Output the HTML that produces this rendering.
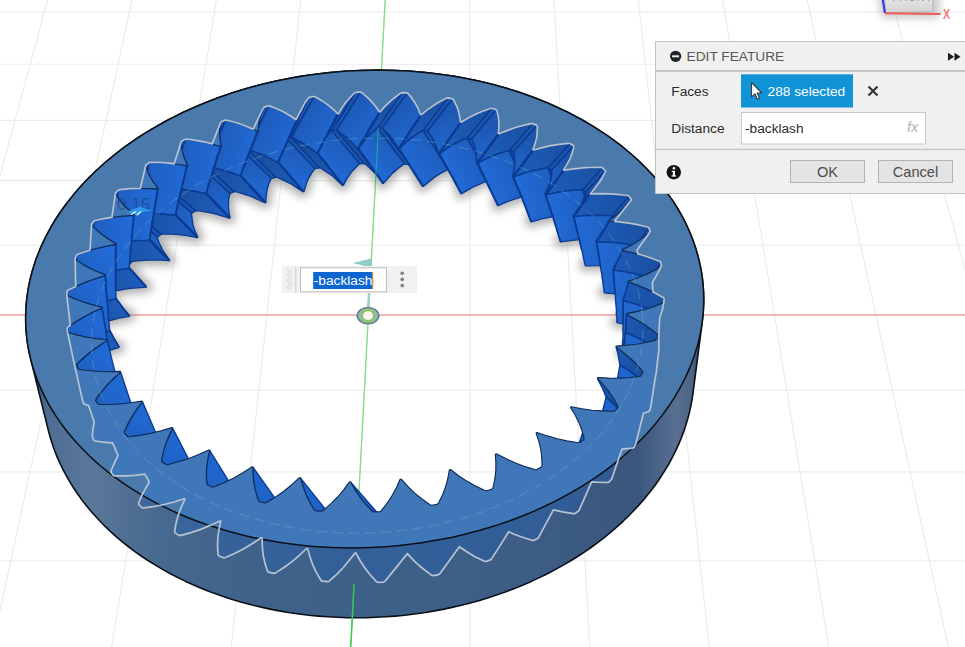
<!DOCTYPE html>
<html><head><meta charset="utf-8"><title>Fusion</title>
<style>
html,body{margin:0;padding:0;background:#fff;}
body{width:965px;height:647px;overflow:hidden;font-family:"Liberation Sans",sans-serif;}
svg{display:block;position:absolute;left:0;top:0;}
text{font-family:"Liberation Sans",sans-serif;}
</style></head><body>
<svg width="965" height="647" viewBox="0 0 965 647">
<rect width="965" height="647" fill="#ffffff"/>
<defs>
<linearGradient id="wallg" x1="0" y1="0" x2="965" y2="0" gradientUnits="userSpaceOnUse">
<stop offset="0.027" stop-color="#2c476c"/><stop offset="0.05" stop-color="#4d6d95"/><stop offset="0.095" stop-color="#5a7899"/><stop offset="0.16" stop-color="#48698f"/><stop offset="0.26" stop-color="#3f628a"/><stop offset="0.42" stop-color="#3d6089"/><stop offset="0.57" stop-color="#3c5c85"/><stop offset="0.66" stop-color="#3a567c"/><stop offset="0.70" stop-color="#586f91"/><stop offset="0.716" stop-color="#4d6587"/><stop offset="0.73" stop-color="#2c4263"/></linearGradient>
<filter id="blur6" x="-20%" y="-20%" width="140%" height="140%"><feGaussianBlur stdDeviation="4"/></filter>
<clipPath id="bodyclip"><path d="M377.9,70.1 370.1,70.2 362.3,70.4 354.5,70.7 346.7,71.1 338.9,71.7 331.1,72.4 323.4,73.2 315.6,74.2 307.9,75.2 300.2,76.4 292.5,77.8 284.9,79.2 277.3,80.8 269.7,82.5 262.2,84.3 254.7,86.2 247.3,88.3 239.9,90.5 232.6,92.8 225.3,95.2 218.1,97.8 211.0,100.5 204.0,103.3 197.0,106.2 190.1,109.2 183.3,112.3 176.6,115.6 169.9,119.0 163.4,122.5 157.0,126.1 150.7,129.8 144.4,133.6 138.3,137.5 132.3,141.6 126.5,145.7 120.7,150.0 115.1,154.3 109.6,158.8 104.3,163.3 99.1,168.0 94.0,172.7 89.1,177.6 84.3,182.5 79.7,187.6 75.2,192.7 71.0,197.9 66.8,203.2 62.9,208.5 59.1,214.0 55.5,219.5 52.1,225.1 48.9,230.8 45.9,236.5 43.1,242.4 40.4,248.2 38.0,254.2 35.8,260.1 33.8,266.2 32.0,272.3 30.4,278.4 29.0,284.6 27.9,290.8 27.0,297.0 26.3,303.3 25.9,309.6 25.7,315.9 25.7,322.2 26.0,328.6 26.5,334.9 27.2,341.3 28.2,347.6 29.5,354.0 31.0,360.3 48.7,431.9 50.5,438.2 52.5,444.4 54.7,450.7 57.1,456.9 59.8,463.0 62.8,469.1 66.0,475.2 69.4,481.2 73.1,487.2 77.0,493.0 81.1,498.9 85.5,504.6 90.1,510.2 95.0,515.8 100.1,521.3 105.4,526.7 110.9,531.9 116.7,537.1 122.7,542.1 128.9,547.0 135.3,551.8 141.9,556.5 148.8,561.0 155.8,565.4 163.0,569.6 170.4,573.7 178.0,577.6 185.7,581.4 193.7,585.0 201.7,588.4 210.0,591.7 218.4,594.8 226.9,597.7 235.6,600.4 244.4,602.9 253.3,605.3 262.3,607.4 271.4,609.4 280.6,611.1 289.9,612.7 299.3,614.0 308.8,615.2 318.3,616.1 327.8,616.8 337.4,617.3 347.0,617.7 356.6,617.8 366.3,617.7 375.9,617.3 385.6,616.8 395.2,616.1 404.8,615.2 414.3,614.0 423.8,612.7 433.3,611.1 442.7,609.4 452.0,607.4 461.2,605.3 470.4,602.9 479.5,600.4 488.4,597.7 497.2,594.8 505.9,591.7 514.5,588.4 523.0,585.0 531.3,581.4 539.4,577.6 547.4,573.7 555.2,569.6 562.8,565.4 570.3,561.0 577.6,556.5 584.7,551.8 591.6,547.0 598.3,542.1 604.8,537.1 611.1,531.9 617.2,526.7 623.1,521.3 628.7,515.8 634.1,510.2 639.3,504.6 644.3,498.9 649.1,493.0 653.6,487.2 657.9,481.2 661.9,475.2 665.7,469.1 669.3,463.0 672.6,456.9 675.7,450.7 678.6,444.4 681.2,438.2 683.6,431.9 685.7,425.6 687.6,419.2 689.3,412.9 690.7,406.6 691.9,400.3 692.9,393.9 702.2,322.2 702.9,315.9 703.4,309.6 703.7,303.3 703.7,297.0 703.5,290.8 703.0,284.6 702.4,278.4 701.5,272.3 700.3,266.2 699.0,260.1 697.4,254.2 695.7,248.2 693.7,242.4 691.5,236.5 689.1,230.8 686.5,225.1 683.8,219.5 680.8,214.0 677.6,208.5 674.3,203.2 670.7,197.9 667.0,192.7 663.1,187.6 659.1,182.5 654.9,177.6 650.5,172.7 645.9,168.0 641.2,163.3 636.4,158.8 631.4,154.3 626.3,150.0 621.0,145.7 615.6,141.6 610.0,137.5 604.4,133.6 598.6,129.8 592.7,126.1 586.6,122.5 580.5,119.0 574.2,115.6 567.9,112.3 561.4,109.2 554.9,106.2 548.2,103.3 541.5,100.5 534.6,97.8 527.7,95.2 520.8,92.8 513.7,90.5 506.6,88.3 499.4,86.2 492.1,84.3 484.8,82.5 477.4,80.8 470.0,79.2 462.5,77.8 455.0,76.4 447.4,75.2 439.8,74.2 432.1,73.2 424.5,72.4 416.7,71.7 409.0,71.1 401.3,70.7 393.5,70.4 385.7,70.2Z"/></clipPath>
<clipPath id="holeclip"><path d="M664.0,300.3 664.0,298.5 663.0,297.4 661.4,296.5 654.4,292.6 646.7,288.9 638.0,285.3 628.7,282.0 628.6,281.2 637.6,278.1 645.7,274.8 652.8,271.3 659.1,267.7 660.6,266.8 661.4,265.8 661.0,264.0 660.7,262.2 659.4,261.3 657.7,260.6 650.1,257.7 641.8,255.1 632.7,252.7 622.9,250.5 622.6,249.8 630.4,245.8 637.5,241.6 643.4,237.4 648.5,233.2 649.7,232.3 650.3,231.2 649.5,229.5 648.7,227.8 647.3,227.1 645.4,226.6 637.5,224.7 629.0,223.1 619.6,221.9 609.7,221.0 609.3,220.3 615.8,215.5 621.5,210.7 626.2,206.0 630.1,201.4 631.0,200.3 631.3,199.2 630.1,197.7 629.0,196.1 627.5,195.6 625.6,195.4 617.5,194.4 609.0,193.8 599.7,193.7 589.9,194.0 589.4,193.4 594.5,188.0 598.8,182.7 602.2,177.7 604.8,172.8 605.4,171.6 605.4,170.5 603.9,169.2 602.4,167.9 600.8,167.5 599.0,167.5 591.0,167.5 582.6,167.9 573.6,168.8 564.3,170.2 563.6,169.6 567.3,163.9 570.2,158.3 572.2,153.1 573.5,148.0 573.8,146.9 573.5,145.8 571.8,144.7 570.0,143.6 568.4,143.4 566.6,143.6 558.9,144.5 550.9,145.8 542.5,147.7 533.7,150.0 533.0,149.6 535.1,143.6 536.5,137.9 537.2,132.6 537.3,127.6 537.3,126.4 536.7,125.4 534.8,124.5 532.8,123.6 531.2,123.6 529.5,124.0 522.3,125.7 514.8,127.9 507.0,130.7 499.1,133.9 498.3,133.6 498.8,127.5 498.9,121.8 498.2,116.6 497.1,111.7 496.8,110.6 496.0,109.7 493.9,109.0 491.8,108.4 490.2,108.5 488.6,109.1 482.0,111.6 475.2,114.5 468.3,118.0 461.4,122.0 460.5,121.8 459.6,115.9 458.2,110.3 456.3,105.3 453.9,100.7 453.4,99.6 452.4,98.8 450.2,98.4 447.9,98.0 446.4,98.3 445.0,99.1 439.1,102.2 433.2,105.8 427.3,110.0 421.5,114.7 420.5,114.5 418.1,108.8 415.4,103.6 412.3,98.9 408.8,94.6 408.0,93.6 406.9,93.0 404.6,92.8 402.2,92.7 400.8,93.2 399.7,94.0 394.6,97.7 389.7,101.9 384.9,106.6 380.3,111.8 379.3,111.8 375.5,106.5 371.5,101.7 367.2,97.4 362.8,93.6 361.7,92.7 360.4,92.2 358.1,92.3 355.8,92.4 354.5,93.0 353.5,94.0 349.4,98.2 345.5,102.8 342.0,108.0 338.7,113.6 337.7,113.7 332.6,108.9 327.4,104.6 322.1,100.9 316.7,97.7 315.5,96.9 314.0,96.5 311.7,96.9 309.4,97.2 308.3,98.0 307.6,99.1 304.5,103.6 301.8,108.6 299.6,114.1 297.7,120.0 296.7,120.2 290.5,116.0 284.2,112.4 277.9,109.3 271.7,106.7 270.2,106.1 268.7,105.9 266.5,106.5 264.3,107.1 263.3,108.0 262.9,109.1 261.0,113.9 259.5,119.1 258.6,124.8 258.2,130.9 257.3,131.2 249.9,127.8 242.6,124.8 235.6,122.5 228.6,120.7 227.0,120.2 225.4,120.2 223.3,121.0 221.2,121.9 220.5,122.9 220.4,124.0 219.6,129.0 219.5,134.3 220.0,140.0 221.1,146.1 220.3,146.5 212.0,143.9 203.9,141.9 196.1,140.4 188.6,139.3 186.9,139.1 185.2,139.2 183.3,140.3 181.4,141.4 181.0,142.4 181.1,143.6 181.6,148.6 182.8,153.9 184.8,159.5 187.4,165.3 186.7,165.8 177.6,164.3 168.9,163.2 160.6,162.6 152.7,162.4 150.8,162.3 149.2,162.7 147.5,164.0 145.9,165.3 145.6,166.4 146.1,167.5 147.9,172.4 150.4,177.5 153.9,182.9 158.1,188.3 157.4,188.9 147.8,188.5 138.6,188.4 130.0,188.8 121.8,189.5 119.9,189.7 118.3,190.2 117.0,191.7 115.6,193.2 115.6,194.3 116.4,195.4 119.5,200.1 123.4,204.8 128.3,209.7 134.0,214.7 133.5,215.3 123.5,216.0 114.0,217.0 105.3,218.4 97.2,220.1 95.2,220.5 93.7,221.3 92.7,222.9 91.7,224.5 92.0,225.6 93.1,226.6 97.5,230.9 102.7,235.2 109.0,239.5 116.1,243.7 115.7,244.4 105.7,246.3 96.2,248.5 87.6,250.9 79.6,253.6 77.8,254.3 76.4,255.2 75.8,256.9 75.1,258.7 75.8,259.8 77.1,260.6 82.7,264.4 89.2,268.0 96.8,271.5 105.1,274.8 105.0,275.6 95.1,278.7 85.9,282.0 77.7,285.5 70.2,289.2 68.4,290.1 67.3,291.1 67.0,293.0 66.8,294.8 67.8,295.8 69.4,296.5 76.1,299.5 83.7,302.3 92.4,304.9 101.9,307.1 101.9,307.9 92.6,312.2 84.0,316.7 76.4,321.2 69.6,325.9 68.0,327.0 67.1,328.2 67.3,330.0 67.6,331.9 68.8,332.7 70.6,333.2 78.4,335.4 86.9,337.2 96.5,338.6 106.8,339.7 107.0,340.4 98.6,345.9 90.9,351.5 84.3,357.0 78.4,362.5 77.1,363.8 76.4,365.1 77.2,366.9 77.9,368.7 79.4,369.4 81.4,369.7 89.9,370.8 99.2,371.5 109.4,371.7 120.2,371.4 120.6,372.1 113.3,378.7 106.9,385.2 101.5,391.5 96.9,397.7 95.9,399.2 95.5,400.6 96.7,402.3 98.0,404.0 99.7,404.5 101.8,404.5 110.9,404.5 120.5,404.0 131.0,402.8 142.0,401.1 142.6,401.8 136.8,409.2 131.9,416.6 128.0,423.6 124.9,430.3 124.2,431.9 124.2,433.4 125.9,434.9 127.6,436.5 129.5,436.7 131.6,436.4 140.9,435.2 150.7,433.4 161.0,430.8 171.8,427.6 172.6,428.2 168.6,436.4 165.5,444.3 163.3,451.8 161.9,458.9 161.5,460.6 161.9,462.0 164.0,463.3 166.1,464.6 168.1,464.6 170.2,464.0 179.4,461.5 188.8,458.4 198.7,454.5 208.8,449.9 209.8,450.4 207.8,459.0 206.6,467.2 206.3,474.9 206.7,482.1 206.8,483.8 207.5,485.1 210.0,486.1 212.4,487.1 214.4,486.8 216.4,486.0 225.1,482.3 233.8,478.0 242.8,472.7 251.8,466.9 252.9,467.2 253.1,475.9 254.0,484.2 255.6,491.7 257.8,498.8 258.3,500.5 259.4,501.7 262.1,502.3 264.9,503.0 266.8,502.4 268.6,501.3 276.4,496.5 284.1,491.0 291.8,484.7 299.3,477.7 300.5,477.9 302.9,486.4 305.8,494.4 309.3,501.6 313.3,508.2 314.2,509.8 315.6,510.8 318.5,511.1 321.4,511.3 323.2,510.5 324.7,509.2 331.2,503.4 337.6,497.0 343.6,489.8 349.4,481.9 350.6,481.9 355.1,489.9 360.0,497.3 365.3,503.9 370.9,509.8 372.2,511.2 373.9,512.0 376.8,511.9 379.7,511.7 381.3,510.7 382.5,509.2 387.5,502.7 392.1,495.6 396.4,487.7 400.1,479.2 401.3,479.1 407.8,486.3 414.4,492.8 421.3,498.5 428.2,503.5 429.9,504.7 431.7,505.2 434.5,504.7 437.4,504.1 438.7,502.9 439.4,501.3 442.8,494.3 445.6,486.8 447.8,478.5 449.4,469.8 450.6,469.5 458.6,475.7 466.8,481.1 474.9,485.7 482.9,489.6 484.8,490.5 486.7,490.8 489.3,489.9 492.0,489.0 493.0,487.7 493.3,486.0 494.8,478.8 495.8,471.1 495.9,462.8 495.3,454.2 496.4,453.8 505.7,458.6 515.0,462.8 524.0,466.2 532.7,468.9 534.8,469.5 536.7,469.6 539.1,468.3 541.4,467.1 542.0,465.7 542.0,464.0 541.7,456.8 540.7,449.3 538.8,441.3 536.1,433.0 537.0,432.5 547.3,435.9 557.3,438.8 566.8,440.9 575.9,442.3 578.0,442.7 579.9,442.5 581.9,441.0 583.8,439.5 584.1,438.0 583.6,436.4 581.6,429.5 578.8,422.4 575.1,415.0 570.5,407.4 571.2,406.7 582.0,408.7 592.3,410.2 601.9,410.9 611.0,411.2 613.2,411.2 614.9,410.8 616.5,409.1 617.9,407.4 617.8,406.0 617.0,404.5 613.4,398.2 609.0,391.7 603.6,385.0 597.4,378.2 597.9,377.5 608.7,378.1 619.0,378.2 628.4,377.7 637.2,376.8 639.2,376.6 640.8,376.0 641.9,374.2 642.9,372.3 642.4,371.0 641.3,369.7 636.3,364.0 630.6,358.3 623.7,352.6 616.1,346.9 616.5,346.1 627.0,345.3 636.8,344.2 645.7,342.5 653.9,340.6 655.8,340.1 657.1,339.3 657.7,337.5 658.2,335.6 657.5,334.4 656.1,333.2 650.0,328.4 643.1,323.7 635.2,319.0 626.5,314.4 626.7,313.6 636.5,311.6 645.7,309.3 653.8,306.7 661.1,303.8 662.8,303.1 663.9,302.2Z"/></clipPath>
</defs>
<defs><linearGradient id="g0" gradientUnits="userSpaceOnUse" x1="626.2" y1="291.4" x2="662.0" y2="306.5"><stop offset="0" stop-color="#1c59b3"/><stop offset="1" stop-color="#194fa0"/></linearGradient><linearGradient id="g1" gradientUnits="userSpaceOnUse" x1="623.1" y1="327.3" x2="658.2" y2="342.4"><stop offset="0" stop-color="#2167cf"/><stop offset="1" stop-color="#1d5cb9"/></linearGradient><linearGradient id="g2" gradientUnits="userSpaceOnUse" x1="618.3" y1="260.4" x2="656.2" y2="270.7"><stop offset="0" stop-color="#1d59b4"/><stop offset="1" stop-color="#1a50a1"/></linearGradient><linearGradient id="g3" gradientUnits="userSpaceOnUse" x1="615.4" y1="296.3" x2="652.6" y2="306.6"><stop offset="0" stop-color="#2168d1"/><stop offset="1" stop-color="#1e5dbb"/></linearGradient><linearGradient id="g4" gradientUnits="userSpaceOnUse" x1="603.4" y1="231.4" x2="642.1" y2="237.0"><stop offset="0" stop-color="#1d5ab6"/><stop offset="1" stop-color="#1a51a3"/></linearGradient><linearGradient id="g5" gradientUnits="userSpaceOnUse" x1="602.9" y1="230.8" x2="623.1" y2="209.1"><stop offset="0" stop-color="#1e5ebe"/><stop offset="1" stop-color="#1b54aa"/></linearGradient><linearGradient id="g6" gradientUnits="userSpaceOnUse" x1="600.8" y1="267.3" x2="638.8" y2="272.9"><stop offset="0" stop-color="#2168d2"/><stop offset="1" stop-color="#1e5dbc"/></linearGradient><linearGradient id="g7" gradientUnits="userSpaceOnUse" x1="582.1" y1="205.3" x2="620.6" y2="206.2"><stop offset="0" stop-color="#1d5bb7"/><stop offset="1" stop-color="#1a51a4"/></linearGradient><linearGradient id="g8" gradientUnits="userSpaceOnUse" x1="581.5" y1="204.7" x2="595.6" y2="181.5"><stop offset="0" stop-color="#1e5fbf"/><stop offset="1" stop-color="#1b55ab"/></linearGradient><linearGradient id="g9" gradientUnits="userSpaceOnUse" x1="579.9" y1="241.2" x2="617.7" y2="242.0"><stop offset="0" stop-color="#2269d4"/><stop offset="1" stop-color="#1e5ebd"/></linearGradient><linearGradient id="g10" gradientUnits="userSpaceOnUse" x1="555.2" y1="182.5" x2="592.6" y2="178.9"><stop offset="0" stop-color="#1d5bb8"/><stop offset="1" stop-color="#1a52a5"/></linearGradient><linearGradient id="g11" gradientUnits="userSpaceOnUse" x1="554.5" y1="182.0" x2="562.6" y2="157.9"><stop offset="0" stop-color="#1f60c1"/><stop offset="1" stop-color="#1b55ac"/></linearGradient><linearGradient id="g12" gradientUnits="userSpaceOnUse" x1="553.6" y1="218.3" x2="590.3" y2="214.8"><stop offset="0" stop-color="#226ad5"/><stop offset="1" stop-color="#1e5ebe"/></linearGradient><linearGradient id="g13" gradientUnits="userSpaceOnUse" x1="523.7" y1="163.4" x2="559.0" y2="155.8"><stop offset="0" stop-color="#1d5cb9"/><stop offset="1" stop-color="#1a52a5"/></linearGradient><linearGradient id="g14" gradientUnits="userSpaceOnUse" x1="522.9" y1="163.0" x2="525.0" y2="138.8"><stop offset="0" stop-color="#1f61c3"/><stop offset="1" stop-color="#1c56ae"/></linearGradient><linearGradient id="g15" gradientUnits="userSpaceOnUse" x1="522.7" y1="199.2" x2="557.4" y2="191.6"><stop offset="0" stop-color="#226ad5"/><stop offset="1" stop-color="#1e5fbf"/></linearGradient><linearGradient id="g16" gradientUnits="userSpaceOnUse" x1="488.5" y1="148.5" x2="521.0" y2="137.1"><stop offset="0" stop-color="#1d5cb9"/><stop offset="1" stop-color="#1a52a5"/></linearGradient><linearGradient id="g17" gradientUnits="userSpaceOnUse" x1="487.6" y1="148.1" x2="483.7" y2="124.4"><stop offset="0" stop-color="#1f62c5"/><stop offset="1" stop-color="#1c57b0"/></linearGradient><linearGradient id="g18" gradientUnits="userSpaceOnUse" x1="488.1" y1="184.2" x2="520.0" y2="172.9"><stop offset="0" stop-color="#226ad5"/><stop offset="1" stop-color="#1e5fbf"/></linearGradient><linearGradient id="g19" gradientUnits="userSpaceOnUse" x1="450.4" y1="137.8" x2="479.4" y2="123.2"><stop offset="0" stop-color="#1d5cb9"/><stop offset="1" stop-color="#1a52a5"/></linearGradient><linearGradient id="g20" gradientUnits="userSpaceOnUse" x1="449.4" y1="137.6" x2="439.8" y2="114.9"><stop offset="0" stop-color="#2063c7"/><stop offset="1" stop-color="#1c58b2"/></linearGradient><linearGradient id="g21" gradientUnits="userSpaceOnUse" x1="450.7" y1="173.6" x2="479.2" y2="158.9"><stop offset="0" stop-color="#226ad5"/><stop offset="1" stop-color="#1e5ebe"/></linearGradient><linearGradient id="g22" gradientUnits="userSpaceOnUse" x1="449.8" y1="173.4" x2="440.3" y2="150.6"><stop offset="0" stop-color="#1c58b2"/><stop offset="1" stop-color="#194f9f"/></linearGradient><linearGradient id="g23" gradientUnits="userSpaceOnUse" x1="410.4" y1="131.7" x2="435.3" y2="114.3"><stop offset="0" stop-color="#1d5bb8"/><stop offset="1" stop-color="#1a52a5"/></linearGradient><linearGradient id="g24" gradientUnits="userSpaceOnUse" x1="409.4" y1="131.6" x2="394.4" y2="110.5"><stop offset="0" stop-color="#2064c9"/><stop offset="1" stop-color="#1d59b4"/></linearGradient><linearGradient id="g25" gradientUnits="userSpaceOnUse" x1="411.4" y1="167.5" x2="435.9" y2="149.9"><stop offset="0" stop-color="#2269d4"/><stop offset="1" stop-color="#1e5ebe"/></linearGradient><linearGradient id="g26" gradientUnits="userSpaceOnUse" x1="410.4" y1="167.4" x2="395.7" y2="146.2"><stop offset="0" stop-color="#1c57b0"/><stop offset="1" stop-color="#194e9d"/></linearGradient><linearGradient id="g27" gradientUnits="userSpaceOnUse" x1="369.3" y1="130.2" x2="389.8" y2="110.4"><stop offset="0" stop-color="#1d5bb7"/><stop offset="1" stop-color="#1a51a4"/></linearGradient><linearGradient id="g28" gradientUnits="userSpaceOnUse" x1="368.3" y1="130.2" x2="348.2" y2="111.2"><stop offset="0" stop-color="#2065cc"/><stop offset="1" stop-color="#1d5ab6"/></linearGradient><linearGradient id="g29" gradientUnits="userSpaceOnUse" x1="371.1" y1="165.9" x2="391.1" y2="146.0"><stop offset="0" stop-color="#2269d3"/><stop offset="1" stop-color="#1e5ebd"/></linearGradient><linearGradient id="g30" gradientUnits="userSpaceOnUse" x1="370.1" y1="166.0" x2="350.4" y2="146.9"><stop offset="0" stop-color="#1c57b0"/><stop offset="1" stop-color="#194e9e"/></linearGradient><linearGradient id="g31" gradientUnits="userSpaceOnUse" x1="328.2" y1="133.3" x2="343.6" y2="111.6"><stop offset="0" stop-color="#1d5bb7"/><stop offset="1" stop-color="#1a51a3"/></linearGradient><linearGradient id="g32" gradientUnits="userSpaceOnUse" x1="327.2" y1="133.5" x2="302.5" y2="117.0"><stop offset="0" stop-color="#2166ce"/><stop offset="1" stop-color="#1d5bb8"/></linearGradient><linearGradient id="g33" gradientUnits="userSpaceOnUse" x1="330.7" y1="169.0" x2="345.8" y2="147.2"><stop offset="0" stop-color="#2168d2"/><stop offset="1" stop-color="#1e5dbc"/></linearGradient><linearGradient id="g34" gradientUnits="userSpaceOnUse" x1="329.8" y1="169.2" x2="305.4" y2="152.7"><stop offset="0" stop-color="#1c59b2"/><stop offset="1" stop-color="#194fa0"/></linearGradient><linearGradient id="g35" gradientUnits="userSpaceOnUse" x1="287.9" y1="141.0" x2="297.9" y2="117.9"><stop offset="0" stop-color="#1d5ab6"/><stop offset="1" stop-color="#1a51a3"/></linearGradient><linearGradient id="g36" gradientUnits="userSpaceOnUse" x1="287.0" y1="141.2" x2="258.0" y2="127.8"><stop offset="0" stop-color="#2167d0"/><stop offset="1" stop-color="#1d5cba"/></linearGradient><linearGradient id="g37" gradientUnits="userSpaceOnUse" x1="291.2" y1="176.7" x2="301.0" y2="153.5"><stop offset="0" stop-color="#2167d0"/><stop offset="1" stop-color="#1e5cba"/></linearGradient><linearGradient id="g38" gradientUnits="userSpaceOnUse" x1="290.2" y1="177.0" x2="261.8" y2="163.5"><stop offset="0" stop-color="#1d5ab4"/><stop offset="1" stop-color="#1a50a1"/></linearGradient><linearGradient id="g39" gradientUnits="userSpaceOnUse" x1="248.5" y1="153.5" x2="215.9" y2="143.5"><stop offset="0" stop-color="#2168d1"/><stop offset="1" stop-color="#1e5dbb"/></linearGradient><linearGradient id="g40" gradientUnits="userSpaceOnUse" x1="253.4" y1="188.9" x2="257.5" y2="164.9"><stop offset="0" stop-color="#2167cf"/><stop offset="1" stop-color="#1d5cb9"/></linearGradient><linearGradient id="g41" gradientUnits="userSpaceOnUse" x1="252.5" y1="189.3" x2="220.5" y2="179.3"><stop offset="0" stop-color="#1d5ab6"/><stop offset="1" stop-color="#1a51a3"/></linearGradient><linearGradient id="g42" gradientUnits="userSpaceOnUse" x1="212.7" y1="170.0" x2="177.2" y2="163.9"><stop offset="0" stop-color="#2269d3"/><stop offset="1" stop-color="#1e5dbc"/></linearGradient><linearGradient id="g43" gradientUnits="userSpaceOnUse" x1="218.2" y1="205.4" x2="216.5" y2="181.1"><stop offset="0" stop-color="#2065cc"/><stop offset="1" stop-color="#1d5bb7"/></linearGradient><linearGradient id="g44" gradientUnits="userSpaceOnUse" x1="217.4" y1="205.8" x2="182.5" y2="199.7"><stop offset="0" stop-color="#1d5bb7"/><stop offset="1" stop-color="#1a51a4"/></linearGradient><linearGradient id="g45" gradientUnits="userSpaceOnUse" x1="180.6" y1="190.5" x2="142.9" y2="188.6"><stop offset="0" stop-color="#2269d4"/><stop offset="1" stop-color="#1e5ebd"/></linearGradient><linearGradient id="g46" gradientUnits="userSpaceOnUse" x1="186.6" y1="225.8" x2="179.0" y2="201.9"><stop offset="0" stop-color="#2064ca"/><stop offset="1" stop-color="#1d5ab5"/></linearGradient><linearGradient id="g47" gradientUnits="userSpaceOnUse" x1="185.9" y1="226.3" x2="148.9" y2="224.4"><stop offset="0" stop-color="#1d5cb9"/><stop offset="1" stop-color="#1a52a5"/></linearGradient><linearGradient id="g48" gradientUnits="userSpaceOnUse" x1="153.1" y1="214.6" x2="114.1" y2="217.2"><stop offset="0" stop-color="#226ad5"/><stop offset="1" stop-color="#1e5ebe"/></linearGradient><linearGradient id="g49" gradientUnits="userSpaceOnUse" x1="159.6" y1="249.9" x2="145.9" y2="227.1"><stop offset="0" stop-color="#2063c8"/><stop offset="1" stop-color="#1c59b3"/></linearGradient><linearGradient id="g50" gradientUnits="userSpaceOnUse" x1="159.0" y1="250.5" x2="120.7" y2="253.1"><stop offset="0" stop-color="#1d5cb9"/><stop offset="1" stop-color="#1a52a6"/></linearGradient><linearGradient id="g51" gradientUnits="userSpaceOnUse" x1="131.1" y1="241.9" x2="91.7" y2="249.1"><stop offset="0" stop-color="#226ad5"/><stop offset="1" stop-color="#1e5ebe"/></linearGradient><linearGradient id="g52" gradientUnits="userSpaceOnUse" x1="137.5" y1="277.8" x2="99.0" y2="285.0"><stop offset="0" stop-color="#1d5cb9"/><stop offset="1" stop-color="#1a52a6"/></linearGradient><linearGradient id="g53" gradientUnits="userSpaceOnUse" x1="115.4" y1="271.6" x2="76.9" y2="283.8"><stop offset="0" stop-color="#226ad5"/><stop offset="1" stop-color="#1e5ebe"/></linearGradient><linearGradient id="g54" gradientUnits="userSpaceOnUse" x1="122.3" y1="307.5" x2="84.5" y2="319.7"><stop offset="0" stop-color="#1d5cb9"/><stop offset="1" stop-color="#1a52a6"/></linearGradient><linearGradient id="g55" gradientUnits="userSpaceOnUse" x1="106.9" y1="303.2" x2="70.4" y2="320.1"><stop offset="0" stop-color="#2269d4"/><stop offset="1" stop-color="#1e5ebe"/></linearGradient><linearGradient id="g56" gradientUnits="userSpaceOnUse" x1="114.1" y1="339.1" x2="78.3" y2="356.0"><stop offset="0" stop-color="#1d5cb9"/><stop offset="1" stop-color="#1a52a5"/></linearGradient><linearGradient id="g57" gradientUnits="userSpaceOnUse" x1="106.2" y1="335.7" x2="72.9" y2="357.2"><stop offset="0" stop-color="#2269d4"/><stop offset="1" stop-color="#1e5ebd"/></linearGradient><linearGradient id="g58" gradientUnits="userSpaceOnUse" x1="113.8" y1="368.1" x2="85.0" y2="393.8"><stop offset="0" stop-color="#2168d2"/><stop offset="1" stop-color="#1e5dbc"/></linearGradient><linearGradient id="g59" gradientUnits="userSpaceOnUse" x1="129.6" y1="399.2" x2="106.7" y2="428.7"><stop offset="0" stop-color="#2168d1"/><stop offset="1" stop-color="#1e5dbb"/></linearGradient><linearGradient id="g60" gradientUnits="userSpaceOnUse" x1="153.8" y1="428.1" x2="137.7" y2="460.4"><stop offset="0" stop-color="#2167cf"/><stop offset="1" stop-color="#1d5cb9"/></linearGradient><linearGradient id="g61" gradientUnits="userSpaceOnUse" x1="185.6" y1="453.4" x2="177.4" y2="487.5"><stop offset="0" stop-color="#2166cd"/><stop offset="1" stop-color="#1d5bb7"/></linearGradient><linearGradient id="g62" gradientUnits="userSpaceOnUse" x1="224.2" y1="474.1" x2="224.5" y2="508.8"><stop offset="0" stop-color="#2065cb"/><stop offset="1" stop-color="#1d5ab6"/></linearGradient><linearGradient id="g63" gradientUnits="userSpaceOnUse" x1="268.3" y1="489.2" x2="277.3" y2="523.3"><stop offset="0" stop-color="#2064ca"/><stop offset="1" stop-color="#1d5ab5"/></linearGradient><linearGradient id="g64" gradientUnits="userSpaceOnUse" x1="316.3" y1="498.0" x2="333.7" y2="530.2"><stop offset="0" stop-color="#2063c8"/><stop offset="1" stop-color="#1c59b3"/></linearGradient><linearGradient id="g65" gradientUnits="userSpaceOnUse" x1="366.3" y1="500.1" x2="391.4" y2="529.1"><stop offset="0" stop-color="#1f62c6"/><stop offset="1" stop-color="#1c58b1"/></linearGradient><linearGradient id="g66" gradientUnits="userSpaceOnUse" x1="575.5" y1="453.4" x2="590.4" y2="484.6"><stop offset="0" stop-color="#1f62c6"/><stop offset="1" stop-color="#1c58b1"/></linearGradient><linearGradient id="g67" gradientUnits="userSpaceOnUse" x1="602.1" y1="387.9" x2="624.3" y2="416.1"><stop offset="0" stop-color="#1b56ad"/><stop offset="1" stop-color="#184d9b"/></linearGradient><linearGradient id="g68" gradientUnits="userSpaceOnUse" x1="599.4" y1="423.7" x2="621.1" y2="451.7"><stop offset="0" stop-color="#2064c9"/><stop offset="1" stop-color="#1c59b3"/></linearGradient><linearGradient id="g69" gradientUnits="userSpaceOnUse" x1="618.4" y1="356.1" x2="646.4" y2="380.4"><stop offset="0" stop-color="#1c57ae"/><stop offset="1" stop-color="#194d9c"/></linearGradient><linearGradient id="g70" gradientUnits="userSpaceOnUse" x1="615.3" y1="392.0" x2="642.7" y2="416.2"><stop offset="0" stop-color="#2065cb"/><stop offset="1" stop-color="#1d5ab5"/></linearGradient><linearGradient id="g71" gradientUnits="userSpaceOnUse" x1="626.3" y1="323.6" x2="658.9" y2="343.5"><stop offset="0" stop-color="#1c58b0"/><stop offset="1" stop-color="#194e9e"/></linearGradient><linearGradient id="g72" gradientUnits="userSpaceOnUse" x1="623.2" y1="359.5" x2="655.0" y2="379.3"><stop offset="0" stop-color="#2166cd"/><stop offset="1" stop-color="#1d5bb7"/></linearGradient></defs>
<path d="M-8.0,205.4 49.7,-7.9M-8.0,647.6 133.7,-7.9M-7.8,560.7 972.5,560.7M110.4,654.8 217.6,-7.9M-7.9,471.9 972.9,471.9M230.4,654.8 301.6,-7.9M-7.9,390.3 972.8,390.3M350.3,654.8 385.6,-7.9M-8.0,315.0 972.7,315.0M470.2,654.8 469.6,-7.9M-7.6,245.3 972.6,245.3M590.2,654.8 553.6,-7.9M-7.6,180.6 972.9,180.6M710.1,654.8 637.5,-7.9M-7.7,120.4 972.8,120.4M830.1,654.8 721.5,-7.9M-7.8,64.2 972.7,64.2M950.0,654.8 805.5,-7.9M-7.8,11.7 973.0,11.7M973.0,298.7 889.5,-7.9" stroke="#ebebeb" stroke-width="1.1" fill="none"/>
<path d="M-8.0,315.0 972.7,315.0" stroke="#f7a3a3" stroke-width="1.5" fill="none"/><path d="M350.3,654.8 385.6,-7.9" stroke="#7fe07f" stroke-width="1.3" fill="none"/>
<path d="M48.7,431.9 50.5,438.2 52.5,444.4 54.7,450.7 57.1,456.9 59.8,463.0 62.8,469.1 66.0,475.2 69.4,481.2 73.1,487.2 77.0,493.0 81.1,498.9 85.5,504.6 90.1,510.2 95.0,515.8 100.1,521.3 105.4,526.7 110.9,531.9 116.7,537.1 122.7,542.1 128.9,547.0 135.3,551.8 141.9,556.5 148.8,561.0 155.8,565.4 163.0,569.6 170.4,573.7 178.0,577.6 185.7,581.4 193.7,585.0 201.7,588.4 210.0,591.7 218.4,594.8 226.9,597.7 235.6,600.4 244.4,602.9 253.3,605.3 262.3,607.4 271.4,609.4 280.6,611.1 289.9,612.7 299.3,614.0 308.8,615.2 318.3,616.1 327.8,616.8 337.4,617.3 347.0,617.7 356.6,617.8 366.3,617.7 375.9,617.3 385.6,616.8 395.2,616.1 404.8,615.2 414.3,614.0 423.8,612.7 433.3,611.1 442.7,609.4 452.0,607.4 461.2,605.3 470.4,602.9 479.5,600.4 488.4,597.7 497.2,594.8 505.9,591.7 514.5,588.4 523.0,585.0 531.3,581.4 539.4,577.6 547.4,573.7 555.2,569.6 562.8,565.4 570.3,561.0 577.6,556.5 584.7,551.8 591.6,547.0 598.3,542.1 604.8,537.1 611.1,531.9 617.2,526.7 623.1,521.3 628.7,515.8 634.1,510.2 639.3,504.6 644.3,498.9 649.1,493.0 653.6,487.2 657.9,481.2 661.9,475.2 665.7,469.1 669.3,463.0 672.6,456.9 675.7,450.7 678.6,444.4 681.2,438.2 683.6,431.9 685.7,425.6 687.6,419.2 689.3,412.9 690.7,406.6 691.9,400.3 692.9,393.9 702.2,322.2 701.2,328.6 700.0,334.9 698.6,341.3 696.8,347.6 694.9,354.0 692.7,360.3 690.2,366.6 687.5,372.9 684.6,379.2 681.4,385.4 677.9,391.6 674.3,397.8 670.3,403.9 666.1,410.0 661.7,415.9 657.0,421.9 652.1,427.7 646.9,433.5 641.5,439.2 635.8,444.8 629.9,450.3 623.8,455.8 617.5,461.1 610.9,466.3 604.2,471.4 597.2,476.3 590.0,481.2 582.6,485.9 574.9,490.4 567.1,494.9 559.2,499.1 551.0,503.3 542.7,507.2 534.1,511.1 525.5,514.7 516.6,518.2 507.7,521.5 498.6,524.6 489.3,527.5 480.0,530.3 470.5,532.8 460.9,535.2 451.3,537.4 441.5,539.3 431.7,541.1 421.8,542.7 411.8,544.1 401.8,545.2 391.8,546.2 381.7,546.9 371.6,547.4 361.5,547.7 351.4,547.9 341.4,547.7 331.3,547.4 321.3,546.9 311.3,546.2 301.4,545.2 291.5,544.1 281.7,542.7 272.0,541.1 262.3,539.3 252.8,537.4 243.4,535.2 234.1,532.8 224.9,530.3 215.8,527.5 206.9,524.6 198.1,521.5 189.5,518.2 181.1,514.7 172.8,511.1 164.7,507.2 156.8,503.3 149.1,499.1 141.6,494.9 134.3,490.4 127.2,485.9 120.3,481.2 113.7,476.3 107.2,471.4 101.0,466.3 95.0,461.1 89.3,455.8 83.8,450.3 78.5,444.8 73.5,439.2 68.7,433.5 64.2,427.7 59.9,421.9 55.8,415.9 52.1,410.0 48.5,403.9 45.3,397.8 42.3,391.6 39.5,385.4 37.0,379.2 34.7,372.9 32.7,366.6 31.0,360.3Z" fill="url(#wallg)"/>
<path d="M377.9,70.1 370.1,70.2 362.3,70.4 354.5,70.7 346.7,71.1 338.9,71.7 331.1,72.4 323.4,73.2 315.6,74.2 307.9,75.2 300.2,76.4 292.5,77.8 284.9,79.2 277.3,80.8 269.7,82.5 262.2,84.3 254.7,86.2 247.3,88.3 239.9,90.5 232.6,92.8 225.3,95.2 218.1,97.8 211.0,100.5 204.0,103.3 197.0,106.2 190.1,109.2 183.3,112.3 176.6,115.6 169.9,119.0 163.4,122.5 157.0,126.1 150.7,129.8 144.4,133.6 138.3,137.5 132.3,141.6 126.5,145.7 120.7,150.0 115.1,154.3 109.6,158.8 104.3,163.3 99.1,168.0 94.0,172.7 89.1,177.6 84.3,182.5 79.7,187.6 75.2,192.7 71.0,197.9 66.8,203.2 62.9,208.5 59.1,214.0 55.5,219.5 52.1,225.1 48.9,230.8 45.9,236.5 43.1,242.4 40.4,248.2 38.0,254.2 35.8,260.1 33.8,266.2 32.0,272.3 30.4,278.4 29.0,284.6 27.9,290.8 27.0,297.0 26.3,303.3 25.9,309.6 25.7,315.9 25.7,322.2 26.0,328.6 26.5,334.9 27.2,341.3 28.2,347.6 29.5,354.0 31.0,360.3 48.7,431.9 50.5,438.2 52.5,444.4 54.7,450.7 57.1,456.9 59.8,463.0 62.8,469.1 66.0,475.2 69.4,481.2 73.1,487.2 77.0,493.0 81.1,498.9 85.5,504.6 90.1,510.2 95.0,515.8 100.1,521.3 105.4,526.7 110.9,531.9 116.7,537.1 122.7,542.1 128.9,547.0 135.3,551.8 141.9,556.5 148.8,561.0 155.8,565.4 163.0,569.6 170.4,573.7 178.0,577.6 185.7,581.4 193.7,585.0 201.7,588.4 210.0,591.7 218.4,594.8 226.9,597.7 235.6,600.4 244.4,602.9 253.3,605.3 262.3,607.4 271.4,609.4 280.6,611.1 289.9,612.7 299.3,614.0 308.8,615.2 318.3,616.1 327.8,616.8 337.4,617.3 347.0,617.7 356.6,617.8 366.3,617.7 375.9,617.3 385.6,616.8 395.2,616.1 404.8,615.2 414.3,614.0 423.8,612.7 433.3,611.1 442.7,609.4 452.0,607.4 461.2,605.3 470.4,602.9 479.5,600.4 488.4,597.7 497.2,594.8 505.9,591.7 514.5,588.4 523.0,585.0 531.3,581.4 539.4,577.6 547.4,573.7 555.2,569.6 562.8,565.4 570.3,561.0 577.6,556.5 584.7,551.8 591.6,547.0 598.3,542.1 604.8,537.1 611.1,531.9 617.2,526.7 623.1,521.3 628.7,515.8 634.1,510.2 639.3,504.6 644.3,498.9 649.1,493.0 653.6,487.2 657.9,481.2 661.9,475.2 665.7,469.1 669.3,463.0 672.6,456.9 675.7,450.7 678.6,444.4 681.2,438.2 683.6,431.9 685.7,425.6 687.6,419.2 689.3,412.9 690.7,406.6 691.9,400.3 692.9,393.9 702.2,322.2 702.9,315.9 703.4,309.6 703.7,303.3 703.7,297.0 703.5,290.8 703.0,284.6 702.4,278.4 701.5,272.3 700.3,266.2 699.0,260.1 697.4,254.2 695.7,248.2 693.7,242.4 691.5,236.5 689.1,230.8 686.5,225.1 683.8,219.5 680.8,214.0 677.6,208.5 674.3,203.2 670.7,197.9 667.0,192.7 663.1,187.6 659.1,182.5 654.9,177.6 650.5,172.7 645.9,168.0 641.2,163.3 636.4,158.8 631.4,154.3 626.3,150.0 621.0,145.7 615.6,141.6 610.0,137.5 604.4,133.6 598.6,129.8 592.7,126.1 586.6,122.5 580.5,119.0 574.2,115.6 567.9,112.3 561.4,109.2 554.9,106.2 548.2,103.3 541.5,100.5 534.6,97.8 527.7,95.2 520.8,92.8 513.7,90.5 506.6,88.3 499.4,86.2 492.1,84.3 484.8,82.5 477.4,80.8 470.0,79.2 462.5,77.8 455.0,76.4 447.4,75.2 439.8,74.2 432.1,73.2 424.5,72.4 416.7,71.7 409.0,71.1 401.3,70.7 393.5,70.4 385.7,70.2Z" fill="none" stroke="#0a0f18" stroke-width="1.6" stroke-linejoin="round"/>
<g clip-path="url(#holeclip)"><path fill-rule="evenodd" d="M693.2,350.2 691.3,338.0 688.6,326.0 685.1,314.2 680.7,302.6 675.6,291.3 669.7,280.3 663.2,269.7 655.9,259.3 648.0,249.3 639.4,239.7 630.3,230.4 620.5,221.6 610.2,213.1 599.5,205.1 588.2,197.6 576.5,190.4 564.3,183.8 551.8,177.6 538.9,171.8 525.6,166.6 512.1,161.8 498.3,157.5 484.2,153.7 469.9,150.4 455.4,147.6 440.8,145.4 426.0,143.6 411.1,142.3 396.1,141.5 381.0,141.3 366.0,141.5 350.9,142.3 335.9,143.6 320.9,145.4 306.0,147.6 291.3,150.4 276.6,153.7 262.2,157.5 247.9,161.8 233.9,166.6 220.1,171.8 206.6,177.6 193.4,183.8 180.6,190.4 168.1,197.6 156.1,205.1 144.5,213.1 133.3,221.6 122.7,230.4 112.6,239.7 103.0,249.3 94.1,259.3 85.8,269.7 78.1,280.3 71.1,291.3 64.8,302.6 59.3,314.2 54.5,326.0 50.6,338.0 47.5,350.2 45.2,362.5 43.8,375.0 43.2,387.6 43.6,400.3 45.0,412.9 47.2,425.6 50.5,438.2 54.7,450.7 59.8,463.0 66.0,475.2 73.1,487.2 81.1,498.9 90.1,510.2 100.1,521.3 110.9,531.9 122.7,542.1 135.3,551.8 148.8,561.0 163.0,569.6 178.0,577.6 193.7,585.0 210.0,591.7 226.9,597.7 244.4,602.9 262.3,607.4 280.6,611.1 299.3,614.0 318.3,616.1 337.4,617.3 356.6,617.8 375.9,617.3 395.2,616.1 414.3,614.0 433.3,611.1 452.0,607.4 470.4,602.9 488.4,597.7 505.9,591.7 523.0,585.0 539.4,577.6 555.2,569.6 570.3,561.0 584.7,551.8 598.3,542.1 611.1,531.9 623.1,521.3 634.1,510.2 644.3,498.9 653.6,487.2 661.9,475.2 669.3,463.0 675.7,450.7 681.2,438.2 685.7,425.6 689.3,412.9 691.9,400.3 693.6,387.6 694.4,375.0 694.2,362.5ZM656.2,372.1 656.3,370.3 655.4,369.2 653.8,368.3 647.1,364.4 639.7,360.7 631.4,357.1 622.4,353.8 622.3,353.0 631.0,349.9 638.8,346.6 645.6,343.1 651.7,339.5 653.1,338.7 653.9,337.6 653.6,335.8 653.2,334.1 652.0,333.1 650.3,332.4 643.1,329.5 635.1,326.9 626.3,324.5 616.9,322.4 616.7,321.6 624.2,317.6 631.0,313.4 636.7,309.3 641.7,305.1 642.8,304.1 643.3,303.0 642.6,301.3 641.8,299.7 640.5,298.9 638.7,298.4 631.1,296.5 622.9,294.9 613.9,293.7 604.4,292.8 604.0,292.1 610.3,287.3 615.8,282.5 620.3,277.8 624.1,273.1 624.9,272.1 625.2,270.9 624.1,269.4 623.0,267.9 621.5,267.3 619.7,267.1 612.0,266.2 603.7,265.6 594.8,265.5 585.4,265.7 584.9,265.1 589.8,259.7 594.0,254.5 597.2,249.4 599.8,244.5 600.4,243.3 600.3,242.2 598.9,240.9 597.5,239.6 596.0,239.2 594.2,239.2 586.5,239.2 578.4,239.6 569.8,240.5 560.8,241.9 560.1,241.3 563.6,235.6 566.4,230.0 568.4,224.7 569.7,219.6 570.0,218.5 569.7,217.4 568.0,216.3 566.4,215.2 564.8,215.0 563.0,215.2 555.6,216.1 547.9,217.4 539.8,219.3 531.3,221.6 530.6,221.2 532.6,215.2 534.0,209.5 534.7,204.1 534.8,199.1 534.8,197.9 534.3,196.9 532.4,196.0 530.5,195.1 528.9,195.1 527.3,195.5 520.3,197.2 513.1,199.4 505.6,202.2 498.0,205.4 497.2,205.1 497.7,199.0 497.8,193.3 497.1,188.0 496.0,183.1 495.8,182.0 495.0,181.1 493.0,180.4 490.9,179.8 489.4,180.0 487.9,180.5 481.5,183.0 475.0,185.9 468.3,189.5 461.6,193.5 460.7,193.3 459.9,187.3 458.5,181.7 456.7,176.7 454.4,172.0 453.9,171.0 452.9,170.2 450.8,169.8 448.6,169.3 447.2,169.7 445.8,170.4 440.1,173.6 434.4,177.2 428.7,181.4 423.1,186.1 422.2,186.0 419.9,180.3 417.3,175.0 414.2,170.2 410.9,166.0 410.1,164.9 409.0,164.3 406.8,164.1 404.6,164.0 403.2,164.5 402.1,165.3 397.2,169.1 392.4,173.2 387.8,178.0 383.4,183.3 382.4,183.3 378.8,177.9 374.9,173.0 370.8,168.8 366.5,164.9 365.5,164.0 364.2,163.5 361.9,163.6 359.7,163.7 358.5,164.4 357.6,165.3 353.6,169.5 349.9,174.2 346.4,179.4 343.3,185.1 342.3,185.2 337.5,180.3 332.4,176.0 327.3,172.3 322.1,169.0 320.8,168.2 319.4,167.9 317.2,168.2 315.0,168.6 314.0,169.4 313.3,170.4 310.3,175.0 307.7,180.0 305.6,185.5 303.8,191.5 302.8,191.7 296.8,187.5 290.7,183.8 284.7,180.7 278.6,178.1 277.2,177.5 275.7,177.3 273.6,177.9 271.5,178.5 270.6,179.4 270.2,180.5 268.3,185.4 266.9,190.6 266.1,196.3 265.7,202.4 264.8,202.7 257.7,199.3 250.7,196.3 243.9,194.0 237.2,192.1 235.6,191.7 234.1,191.7 232.1,192.5 230.1,193.4 229.4,194.4 229.2,195.5 228.6,200.5 228.4,205.9 228.9,211.6 230.1,217.7 229.3,218.1 221.3,215.5 213.4,213.5 206.0,212.0 198.7,210.9 197.0,210.6 195.4,210.8 193.6,211.9 191.8,213.0 191.3,214.0 191.5,215.2 192.0,220.2 193.2,225.5 195.1,231.2 197.7,237.0 197.0,237.5 188.3,236.0 179.8,234.8 171.8,234.2 164.2,234.1 162.4,234.0 160.9,234.4 159.2,235.6 157.7,236.9 157.5,238.0 157.9,239.2 159.7,244.1 162.1,249.3 165.5,254.6 169.6,260.1 169.0,260.7 159.7,260.2 150.8,260.1 142.5,260.5 134.7,261.3 132.9,261.4 131.3,262.0 130.0,263.4 128.7,264.9 128.8,266.0 129.5,267.1 132.5,271.8 136.3,276.6 141.1,281.5 146.6,286.5 146.1,287.1 136.5,287.8 127.4,288.8 119.0,290.2 111.2,291.9 109.3,292.3 107.9,293.1 106.9,294.7 105.9,296.3 106.3,297.4 107.3,298.4 111.5,302.8 116.6,307.0 122.7,311.3 129.5,315.5 129.2,316.3 119.6,318.1 110.5,320.3 102.2,322.8 94.6,325.5 92.8,326.1 91.5,327.0 90.9,328.8 90.3,330.5 90.9,331.6 92.2,332.4 97.6,336.2 103.9,339.8 111.2,343.3 119.2,346.6 119.1,347.4 109.6,350.5 100.9,353.8 93.0,357.3 85.8,361.0 84.1,361.9 83.0,362.9 82.8,364.8 82.6,366.6 83.5,367.6 85.0,368.3 91.6,371.3 98.9,374.1 107.2,376.6 116.3,378.9 116.4,379.6 107.5,384.0 99.2,388.4 92.0,392.9 85.5,397.6 84.0,398.6 83.1,399.9 83.4,401.7 83.6,403.6 84.8,404.4 86.5,404.9 94.0,407.0 102.2,408.9 111.4,410.3 121.3,411.3 121.5,412.1 113.5,417.5 106.1,423.1 99.8,428.5 94.3,434.0 93.0,435.3 92.4,436.6 93.1,438.4 93.8,440.2 95.2,440.9 97.2,441.2 105.4,442.3 114.2,443.0 124.0,443.2 134.4,442.9 134.8,443.6 127.9,450.1 121.7,456.6 116.6,462.9 112.3,469.1 111.3,470.5 111.0,471.9 112.1,473.6 113.3,475.3 115.0,475.8 117.0,475.8 125.7,475.8 134.9,475.3 145.0,474.1 155.5,472.4 156.1,473.1 150.6,480.5 145.9,487.8 142.3,494.7 139.4,501.5 138.7,503.0 138.7,504.5 140.3,506.0 142.0,507.5 143.7,507.8 145.8,507.5 154.7,506.3 164.0,504.5 173.9,501.9 184.2,498.8 185.0,499.4 181.3,507.5 178.3,515.3 176.2,522.7 174.9,529.8 174.6,531.4 175.0,532.8 177.0,534.1 179.1,535.4 180.9,535.4 183.0,534.8 191.7,532.4 200.7,529.3 210.2,525.4 219.8,520.9 220.7,521.3 218.9,529.8 217.8,538.0 217.5,545.6 217.9,552.7 218.0,554.4 218.8,555.8 221.1,556.7 223.5,557.7 225.4,557.5 227.3,556.6 235.5,553.0 243.9,548.7 252.5,543.5 261.1,537.7 262.1,538.0 262.4,546.6 263.2,554.8 264.8,562.3 266.9,569.3 267.4,570.9 268.5,572.1 271.1,572.8 273.7,573.4 275.6,572.9 277.3,571.8 284.7,567.0 292.0,561.6 299.4,555.3 306.6,548.4 307.7,548.6 310.0,557.0 312.9,564.9 316.2,572.0 320.0,578.6 320.9,580.1 322.3,581.2 325.0,581.4 327.8,581.6 329.5,580.9 331.0,579.5 337.2,573.8 343.2,567.5 349.0,560.3 354.5,552.6 355.7,552.6 360.0,560.5 364.7,567.8 369.8,574.3 375.1,580.2 376.4,581.5 378.0,582.4 380.8,582.2 383.6,582.0 385.1,581.0 386.2,579.5 391.0,573.1 395.4,566.1 399.5,558.3 403.0,549.9 404.2,549.8 410.4,556.9 416.8,563.4 423.3,569.0 430.0,573.9 431.5,575.1 433.3,575.7 436.0,575.1 438.7,574.6 439.9,573.4 440.7,571.8 443.9,564.8 446.6,557.4 448.7,549.2 450.2,540.6 451.3,540.3 459.0,546.4 466.8,551.8 474.6,556.3 482.2,560.2 484.0,561.1 485.9,561.4 488.4,560.5 490.9,559.6 491.9,558.3 492.2,556.6 493.7,549.4 494.6,541.9 494.7,533.7 494.2,525.1 495.2,524.7 504.1,529.5 513.0,533.6 521.6,537.0 530.0,539.7 531.9,540.3 533.8,540.3 536.0,539.1 538.3,537.9 538.9,536.5 538.8,534.8 538.5,527.7 537.6,520.3 535.8,512.3 533.3,504.1 534.1,503.6 544.0,507.0 553.5,509.8 562.6,511.9 571.3,513.3 573.4,513.7 575.2,513.5 577.1,512.0 578.9,510.5 579.2,509.1 578.7,507.5 576.8,500.7 574.2,493.6 570.6,486.2 566.2,478.6 566.9,478.0 577.2,480.0 587.1,481.4 596.3,482.2 605.1,482.4 607.1,482.5 608.8,482.1 610.3,480.4 611.7,478.7 611.6,477.3 610.8,475.8 607.4,469.5 603.2,463.1 598.0,456.4 592.1,449.7 592.6,449.0 603.0,449.6 612.8,449.7 621.8,449.2 630.2,448.3 632.2,448.1 633.7,447.4 634.7,445.6 635.7,443.8 635.3,442.5 634.2,441.2 629.5,435.6 624.0,429.9 617.4,424.2 610.1,418.5 610.5,417.7 620.6,416.9 630.0,415.8 638.5,414.2 646.4,412.2 648.2,411.8 649.5,411.0 650.1,409.1 650.6,407.3 649.9,406.0 648.5,404.9 642.7,400.1 636.1,395.4 628.5,390.7 620.2,386.1 620.4,385.4 629.9,383.4 638.6,381.0 646.4,378.4 653.5,375.6 655.1,374.9 656.2,374.0Z" fill="#6e6e6e" stroke="#6e6e6e" stroke-width="11" filter="url(#blur6)" opacity="0.54"/><g stroke="#0b3b92" stroke-width="1.4" stroke-linejoin="round"><path d="M663.9,299.4 663.1,303.1 663.9,302.1Z" fill="#1950a1"/><path d="M628.6,281.9 628.1,283.4 628.4,284.1 627.9,284.4 627.4,286.4 627.6,287.1 627.1,287.4 625.9,291.9 626.1,292.4 625.6,292.6 623.1,300.4 634.9,303.6 648.1,308.6 654.1,306.9 662.9,303.4 663.9,298.4 662.1,296.9 654.6,292.6 647.1,289.1Z" fill="url(#g0)"/><path d="M660.6,262.4 657.4,268.9 661.1,266.4 661.4,265.6Z" fill="#1a51a3"/><path d="M623.1,300.6 623.4,322.9 622.9,328.4 623.1,337.4 622.6,340.6 622.6,345.6 624.1,345.6 626.1,323.9 626.4,314.6 627.6,313.6 637.1,311.6 647.9,308.6 634.9,303.9Z" fill="url(#g1)"/><path d="M613.4,269.9 630.6,272.6 643.6,275.9 656.6,269.4 660.6,262.1 659.1,261.1 641.4,254.9 622.6,250.6 622.6,251.6 621.4,253.6 621.6,253.9 621.1,254.1 614.6,267.4 614.9,267.6Z" fill="url(#g2)"/><path d="M622.6,249.9 619.4,257.4 613.1,269.4 614.6,267.6 614.4,267.4 620.1,255.6 621.4,253.9 621.4,252.9 622.4,251.6 622.4,250.6 622.9,250.4Z" fill="#1c57b0"/><path d="M648.9,228.1 639.6,240.4 643.4,237.9 648.9,233.1 650.1,231.1Z" fill="#1a52a5"/><path d="M613.4,270.1 614.6,287.6 615.1,288.6 615.1,294.4 615.6,295.4 615.4,298.1 616.4,309.9 616.4,315.4 616.9,316.6 616.9,322.6 622.9,323.9 622.9,299.6 626.1,290.4 628.4,281.1 629.6,281.1 642.9,276.1 631.9,273.1Z" fill="url(#g3)"/><path d="M596.6,241.6 615.4,242.4 632.4,244.9 639.9,239.9 648.6,227.9 647.6,227.1 629.6,223.1 609.6,220.9 609.9,221.1 609.1,221.6 609.1,222.4 608.4,222.9 605.4,227.9 605.4,228.6 603.1,231.6 603.4,231.9 602.6,232.4 601.4,234.4 601.6,234.6 598.6,238.6 598.9,238.9Z" fill="url(#g4)"/><path d="M609.4,220.4 602.6,231.6 596.4,240.9 596.6,241.4 598.6,238.9 598.4,238.6 600.6,235.1 601.4,234.6 601.1,234.4 602.4,232.4 603.1,231.9 602.9,231.6 604.4,229.1 605.1,228.6 605.1,227.9 608.1,222.9 608.9,222.4 608.9,221.6 609.6,221.1Z" fill="#1c59b3"/><path d="M631.1,199.4 621.1,211.4 626.1,206.4 631.1,200.1Z" fill="url(#g5)"/><path d="M629.1,196.4 611.9,216.1 613.1,217.4 619.6,212.6 630.9,199.6 631.1,198.9Z" fill="#1a53a7"/><path d="M596.6,241.9 597.1,242.9 596.9,243.9 597.4,244.4 597.1,245.4 597.6,245.9 597.4,246.9 597.9,247.4 597.6,248.4 598.1,248.9 597.9,249.9 598.4,250.4 598.1,251.4 598.6,251.9 598.4,252.9 598.9,253.4 598.6,254.4 599.1,254.9 598.9,255.9 599.9,262.4 600.4,262.9 600.1,264.1 601.4,272.4 601.9,272.9 601.6,274.1 602.1,274.6 601.9,275.9 604.4,292.9 614.9,293.9 612.9,269.1 619.1,257.4 622.6,249.6 622.9,250.1 623.1,249.6 631.9,245.1 615.4,242.6Z" fill="url(#g6)"/><path d="M612.1,216.6 612.6,218.1 613.1,217.6Z" fill="#1b53a8"/><path d="M573.9,216.4 588.1,215.1 604.6,215.1 611.9,215.9 628.9,196.1 626.6,195.4 610.4,193.9 589.9,193.9 588.6,195.6 588.9,195.9 585.9,199.6 586.1,199.9 582.4,204.6 582.6,204.9Z" fill="url(#g7)"/><path d="M589.4,193.4 582.1,204.1 573.4,215.9 573.6,216.1 576.6,212.9 576.4,212.6 578.6,210.1 578.4,209.9 585.9,199.9 585.6,199.6 588.6,195.9 588.4,195.6 589.6,193.9Z" fill="#1d5ab5"/><path d="M605.4,170.6 585.6,192.6 585.9,193.9 583.6,199.9 579.6,207.1 589.1,193.4 594.4,188.4 598.9,182.6 602.6,176.9 605.4,171.6Z" fill="url(#g8)"/><path d="M602.4,168.1 582.6,189.9 585.6,192.4 605.4,170.4Z" fill="#1b54a9"/><path d="M573.9,216.6 579.6,240.6 580.1,240.9 579.9,241.6 582.1,251.4 582.6,251.9 582.4,252.6 584.6,262.9 585.1,263.4 584.9,264.1 585.4,265.9 600.1,265.6 596.1,240.9 602.4,231.6 608.9,220.6 612.1,218.4 611.9,216.4 609.6,215.6 588.1,215.4Z" fill="url(#g9)"/><path d="M573.4,216.1 578.1,234.4 581.4,249.1 579.6,241.6 579.9,240.9 579.4,240.6 577.1,230.1Z" fill="#1d5ab5"/><path d="M582.6,190.1 584.6,196.4 585.6,193.1 585.4,192.4Z" fill="#1b54aa"/><path d="M602.1,167.9 584.9,167.9 573.1,168.9 564.1,170.4 555.9,181.4 555.4,182.6 545.9,194.6 562.9,191.1 578.6,189.6 582.4,189.9Z" fill="url(#g10)"/><path d="M563.6,169.6 545.4,194.1 545.6,194.4 548.1,191.9 560.1,175.9 560.6,174.6 562.9,172.1 564.1,170.1Z" fill="#1d5bb7"/><path d="M573.6,145.9 551.6,170.1 551.6,175.1 550.1,182.6 547.9,188.9 545.4,193.9 561.6,172.4 567.4,163.6 571.9,153.9 573.9,146.9Z" fill="url(#g11)"/><path d="M573.4,145.6 570.1,143.6 548.1,168.1 551.6,169.9Z" fill="#1b55ab"/><path d="M582.4,190.1 578.6,189.9 562.9,191.4 545.9,194.9 550.1,207.9 550.6,208.1 550.4,208.6 552.1,214.1 552.6,214.4 552.4,214.9 553.6,218.9 554.1,219.1 553.9,219.6 559.6,238.6 560.1,238.9 559.9,239.4 560.4,241.1 560.9,241.4 560.6,241.9 579.1,239.6 573.1,215.9 580.6,205.4 584.1,197.9 584.4,196.1Z" fill="url(#g12)"/><path d="M545.4,194.4 552.6,216.1 560.4,241.6 560.6,241.4 560.1,241.1 559.6,239.4 559.9,238.9 559.4,238.6 553.6,219.6 553.9,219.1 553.4,218.9 552.1,214.9 552.4,214.4 551.9,214.1 550.1,208.6 550.4,208.1 549.9,207.9Z" fill="#1d5bb8"/><path d="M548.1,168.4 551.1,175.9 551.6,172.9 551.4,170.1Z" fill="#1b55ac"/><path d="M569.9,143.6 565.9,143.6 550.6,145.9 533.6,150.1 522.1,165.9 513.6,176.6 529.4,171.4 545.6,167.9 547.9,167.9Z" fill="url(#g13)"/><path d="M533.6,149.9 533.1,149.6 512.9,176.4 513.4,176.6 516.4,173.1Z" fill="#1d5cb9"/><path d="M536.9,125.6 513.1,152.4 513.9,153.4 514.6,159.1 514.6,165.9 512.9,176.1 533.1,149.1 535.1,143.6 536.6,137.6 537.4,127.1Z" fill="url(#g14)"/><path d="M536.6,125.4 532.6,123.9 509.4,150.6 513.1,152.1Z" fill="#1b56ad"/><path d="M547.9,168.1 545.6,168.1 529.4,171.6 513.6,176.9 516.4,183.9 516.9,184.1 516.6,184.4 517.9,187.6 518.6,188.4 518.6,189.4 519.1,189.6 519.1,190.6 519.6,190.9 519.6,191.9 520.1,192.1 520.1,193.1 520.6,193.4 520.4,193.6 521.1,194.6 521.1,195.6 521.6,195.9 521.6,196.9 522.1,197.1 522.6,199.4 523.1,199.6 523.4,201.4 524.9,205.1 525.4,205.4 525.6,207.1 526.6,209.6 527.1,209.9 527.4,211.6 528.4,213.1 528.1,213.6 529.1,215.1 528.9,215.4 530.6,220.1 531.1,220.4 530.9,220.9 531.4,221.9 542.6,218.6 552.4,216.9 545.4,194.9 544.9,194.4 548.1,187.6 549.9,182.6 551.1,176.1Z" fill="url(#g15)"/><path d="M512.9,176.6 522.4,199.4 530.4,220.6 531.1,221.6 529.1,216.9 528.9,215.1 527.9,213.6 528.1,213.1 527.1,211.6 526.9,209.9 526.4,209.6 525.4,207.1 525.1,205.4 524.6,205.1 523.1,201.4 522.9,199.6 522.4,199.4 521.9,197.1 521.4,196.9 521.4,195.9 520.9,195.6 520.9,194.6 520.4,194.4 520.4,193.4 519.9,193.1 519.9,192.1 519.4,191.9 519.4,190.9 518.4,189.4 518.4,188.4 517.6,187.6 516.4,184.4 516.6,184.1 516.1,183.9 514.9,180.9 514.9,179.9Z" fill="#1d5cba"/><path d="M509.4,150.9 514.4,161.1 513.6,153.4 512.6,152.1Z" fill="#1c56ae"/><path d="M532.4,123.9 531.1,123.6 515.4,127.9 506.9,130.9 499.6,134.1 499.1,133.9 478.1,162.6 493.4,155.4 507.4,150.6 509.1,150.6Z" fill="url(#g16)"/><path d="M498.6,133.6 496.4,136.1 476.9,162.9 477.9,162.9 497.9,135.6 498.9,133.9Z" fill="#1e5dbb"/><path d="M496.1,109.9 471.4,139.4 472.6,140.9 475.9,150.9 476.9,162.4 498.4,133.1 498.9,120.9 497.1,111.4Z" fill="url(#g17)"/><path d="M495.6,109.6 491.9,108.4 467.1,138.1 471.1,139.1 471.6,138.9 495.6,110.1Z" fill="#1c57af"/><path d="M509.1,150.9 507.4,150.9 493.4,155.6 484.9,159.4 477.9,163.1 482.4,172.6 482.9,172.9 482.6,173.1 483.1,173.4 482.9,173.9 486.1,180.4 486.6,180.6 486.4,180.9 487.9,184.1 489.4,186.4 489.1,186.6 490.1,188.9 491.4,190.6 491.1,190.9 494.6,198.4 495.1,198.6 495.4,200.1 496.6,201.9 496.4,202.1 498.1,205.6 509.9,200.6 521.1,197.1 512.6,176.6 513.9,170.4 514.4,161.4Z" fill="url(#g18)"/><path d="M476.9,162.6 497.6,205.4 497.9,205.1 496.6,203.4 496.4,201.9 495.1,200.1 494.9,198.6 493.6,196.9 490.9,190.9 491.1,190.6 490.6,190.4 488.9,186.6 489.1,186.4 488.6,186.1 486.1,180.9 486.4,180.6 485.9,180.4 482.9,174.1 483.1,173.9 482.6,173.9 482.6,172.9 482.1,172.6 477.6,163.1Z" fill="#1e5dbc"/><path d="M467.4,138.4 475.9,153.1 474.4,146.1 471.9,140.1 470.9,139.1Z" fill="#1c57b0"/><path d="M491.6,108.4 487.9,109.4 477.4,113.6 461.4,122.1 439.4,153.6 452.1,144.9 464.1,138.9 466.9,138.1Z" fill="url(#g19)"/><path d="M461.1,121.9 460.6,121.9 438.9,153.4 439.4,153.4 460.1,123.9Z" fill="#1e5ebd"/><path d="M452.6,98.9 427.4,131.4 428.9,132.6 431.9,137.1 434.9,142.9 436.9,147.9 438.1,152.9 438.6,153.4 438.4,153.6 460.4,121.9 459.6,115.6 457.9,109.1 453.4,99.4Z" fill="url(#g20)"/><path d="M452.1,98.9 448.6,98.1 447.6,98.4 422.9,130.6 427.1,131.1Z" fill="#1c58b1"/><path d="M467.1,138.4 464.1,139.1 452.1,145.1 439.4,153.9 440.6,155.4 440.6,156.1 441.6,157.1 441.6,157.9 442.6,158.9 442.6,159.6 443.6,160.6 443.6,161.4 444.6,162.4 444.4,162.6 447.9,168.1 447.9,168.9 450.1,172.1 449.9,172.4 453.9,178.9 453.9,179.6 456.4,183.4 456.6,184.6 457.9,186.1 457.6,186.4 461.6,193.6 471.9,187.6 485.9,181.4 476.6,162.9 475.9,153.4Z" fill="url(#g21)"/><path d="M438.4,153.4 450.1,173.6 460.6,193.1 461.4,193.6 457.9,187.4 457.6,186.1 456.4,184.6 456.1,183.4 453.6,179.6 453.6,178.9 449.6,172.4 449.9,172.1 445.4,164.9 445.4,164.1 443.4,161.4 443.4,160.6 442.4,159.6 442.4,158.9 440.1,155.6 440.4,155.4 439.1,153.6Z" fill="#1e5ebe"/><path d="M428.1,131.6 427.9,131.9 432.1,138.1 427.9,131.9Z" fill="url(#g22)"/><path d="M423.1,130.9 438.1,153.1 436.6,147.9 432.4,138.6 427.6,131.6 426.9,131.1Z" fill="#1c58b1"/><path d="M447.6,98.1 442.6,100.4 433.6,105.6 421.1,115.1 399.6,148.4 410.1,138.6 423.6,129.6Z" fill="url(#g23)"/><path d="M421.1,114.6 420.6,114.6 419.1,116.6 417.9,119.1 415.4,122.4 415.4,123.1 414.9,123.1 414.6,124.1 412.1,127.4 411.4,129.1 409.4,131.6 409.1,132.6 407.1,135.1 398.6,148.6 399.4,148.6Z" fill="#1e5fbf"/><path d="M406.9,93.1 382.1,128.1 388.6,134.4 392.1,138.6 398.4,148.9 406.9,135.1 408.9,132.6 409.1,131.6 420.4,114.9 420.4,113.9 415.6,103.6 409.4,95.1Z" fill="url(#g24)"/><path d="M406.6,93.1 402.1,92.9 377.6,128.1 381.9,128.1Z" fill="#1c58b2"/><path d="M422.1,130.9 410.1,138.9 404.6,143.6 399.4,149.1 410.6,165.9 410.4,166.1 422.6,184.9 422.4,185.1 423.1,186.4 433.9,177.6 440.1,173.6 447.6,169.6 435.9,149.9 422.9,130.9Z" fill="url(#g25)"/><path d="M398.6,148.9 422.1,185.9 422.9,186.1 420.9,183.1 421.1,182.9 419.6,181.1 419.9,180.9 418.4,179.1 418.6,178.9 417.1,177.1 417.4,176.9 415.4,174.4 415.6,174.1 413.6,171.6 413.9,171.4 410.1,166.1 410.4,165.9 402.9,154.9 403.1,154.6 402.4,154.1 402.6,153.9 399.1,149.1 399.4,148.9Z" fill="#1e5fbf"/><path d="M382.4,128.6 402.6,155.4 397.9,148.6 395.4,143.9 391.1,137.9 391.4,137.6 390.9,137.6 389.9,136.4 390.1,136.1 389.9,136.4 388.6,134.9 388.9,134.6 388.4,134.6 382.9,128.9 383.1,128.6Z" fill="url(#g26)"/><path d="M377.6,128.4 390.1,144.4 404.9,164.1 408.4,164.4 404.1,157.6 381.9,128.4Z" fill="#1c58b2"/><path d="M401.9,93.1 399.4,94.4 390.6,101.1 384.4,107.1 380.1,112.1 359.9,146.6 366.4,137.9 374.6,129.9 377.6,127.9Z" fill="url(#g27)"/><path d="M380.1,111.9 379.1,112.4 373.9,120.9 374.1,121.1 373.1,122.1 373.4,122.4 369.9,127.6 370.1,127.9 367.4,131.9 367.6,132.1 365.6,134.9 365.9,135.1 363.9,137.9 364.1,138.1 362.1,140.9 362.4,141.1 357.9,148.6 358.4,148.6Z" fill="#1e5fc0"/><path d="M360.4,92.4 336.4,130.4 339.9,132.4 347.6,138.4 357.6,148.9 357.4,148.6 359.4,145.9 359.1,145.6 367.4,132.1 367.1,131.9 379.4,111.9 372.4,102.6 366.4,96.6 362.4,93.1Z" fill="url(#g28)"/><path d="M360.1,92.4 355.6,92.6 332.1,130.6 336.4,130.1Z" fill="#1c59b3"/><path d="M377.1,128.4 372.1,132.4 366.6,137.9 361.9,143.9 358.6,148.9 369.9,163.9 370.4,165.1 377.4,174.4 383.4,183.4 392.6,173.1 398.1,168.4 403.1,164.6 404.6,164.1 378.1,129.1Z" fill="url(#g29)"/><path d="M357.6,148.6 382.6,183.4 383.1,183.4 360.4,151.1 358.4,148.9Z" fill="#1e5fc0"/><path d="M336.9,130.9 364.1,163.4 366.6,164.9 375.4,173.4 357.9,149.1 354.9,146.1 355.1,145.9 354.9,146.1 353.1,144.1 353.4,143.9 353.1,144.1 348.6,139.1 348.4,139.4 346.9,138.1 347.1,137.9 346.9,138.1 345.4,136.9 345.6,136.6 345.4,136.9 344.4,136.1 344.1,135.4 343.9,135.6 342.9,134.9 343.1,134.6 342.4,134.6 342.4,134.1 342.1,134.4 341.1,133.6 341.4,133.4 340.6,133.4 340.6,132.9 340.4,133.1 339.4,132.4 339.6,132.1 338.9,132.1 338.9,131.6 338.1,131.6 337.6,131.1 337.9,130.9Z" fill="url(#g30)"/><path d="M331.9,130.9 359.9,163.9 364.1,163.6 336.1,130.4Z" fill="#1c59b3"/><path d="M355.4,92.9 354.6,93.1 346.6,101.6 341.9,108.4 326.9,136.1 330.1,131.9 331.9,130.6Z" fill="url(#g31)"/><path d="M338.4,113.9 337.9,113.9 335.9,117.1 335.6,118.4 333.9,120.9 334.1,121.1 332.9,123.6 331.9,124.6 332.1,124.9 331.6,125.1 331.9,125.4 329.4,129.4 329.6,129.6 327.6,133.4 327.1,133.6 327.4,133.9 326.9,134.1 327.1,134.4 323.9,139.9 324.1,140.1 323.6,140.4 323.9,140.6 320.4,147.4 319.9,147.6 320.1,147.9 319.6,148.1 319.9,148.4 319.4,148.6 319.6,148.9 317.4,153.1 319.1,150.9Z" fill="#1f60c0"/><path d="M314.1,96.6 291.4,137.6 300.1,141.6 305.6,144.9 316.9,153.4 337.6,113.6 327.4,104.4 319.6,99.4Z" fill="url(#g32)"/><path d="M313.9,96.6 309.6,97.4 308.4,99.1 298.9,116.4 298.1,119.6 289.6,137.9 290.9,137.6 291.9,136.4 299.1,122.6Z" fill="#1c59b3"/><path d="M331.4,131.1 326.1,137.4 317.9,153.1 323.9,160.1 324.4,161.4 324.6,161.1 326.9,163.9 326.9,164.4 343.4,185.1 346.6,179.1 350.4,173.6 353.4,169.9 359.6,163.6 332.6,131.9Z" fill="url(#g33)"/><path d="M317.4,153.4 342.4,185.1 343.1,185.1 326.6,164.4 326.6,163.9 325.6,163.1 324.6,161.4 324.1,161.4 323.6,160.1 318.6,154.4 318.6,153.9Z" fill="#1f60c1"/><path d="M291.9,138.1 319.6,167.9 320.9,168.1 332.1,175.6 342.1,184.9 316.9,153.1 316.6,153.4 315.4,152.4 315.6,152.1 315.4,152.4 314.1,151.4 314.4,151.1 314.1,151.4 312.9,150.4 313.1,150.1 312.9,150.4 312.1,149.9 312.1,149.4 311.9,149.6 309.9,148.1 310.1,147.9 309.4,147.9 309.4,147.4 309.1,147.6 308.4,147.1 308.6,146.9 307.9,146.9 306.6,145.9 306.9,145.6 306.6,145.9 305.9,145.4 306.1,145.1 305.4,145.1 305.4,144.6 304.9,144.9 303.9,144.1 304.1,143.9 303.6,144.1 303.6,143.6 303.4,143.9 302.4,143.4 302.4,142.9 301.9,143.1 301.1,142.6 301.1,142.1 300.6,142.4 300.6,141.9 299.9,141.9 299.9,141.4 299.4,141.6 299.4,141.1 298.9,141.4 298.9,140.9 298.4,141.1 298.4,140.6 297.9,140.9 297.9,140.4 297.4,140.6 297.4,140.1 296.9,140.4 296.9,139.9 296.4,140.1 296.4,139.6 295.9,139.9 295.9,139.4 295.4,139.6 295.4,139.1 294.9,139.4 294.9,138.9 294.4,139.1 294.4,138.6 293.9,138.9 293.9,138.4 293.4,138.6 293.4,138.1 292.6,138.1 292.9,137.9Z" fill="url(#g34)"/><path d="M289.4,138.1 288.4,140.1 315.1,168.6 319.4,167.9 291.1,137.6Z" fill="#1c59b3"/><path d="M309.1,97.6 307.4,99.4 302.6,107.1 299.4,115.1Z" fill="url(#g35)"/><path d="M297.6,120.1 296.9,120.4 295.6,123.4 295.1,123.6 295.4,123.9 294.4,126.1 293.1,127.9 293.4,128.1 290.6,134.1 290.1,134.4 290.4,134.6 289.1,137.4 288.6,137.6 288.9,137.9 288.1,139.6 287.1,140.9 286.9,142.4 285.4,145.6 284.9,145.9 285.1,146.1 284.4,147.9 283.6,148.6 283.4,150.1 277.9,162.1 278.9,161.1 287.9,140.6Z" fill="#1f60c1"/><path d="M268.6,106.1 258.6,126.6 258.1,131.6 250.6,150.4 264.1,155.4 277.4,162.4 296.6,120.1 285.4,112.9 270.6,106.1Z" fill="url(#g36)"/><path d="M268.4,106.1 264.1,107.4 260.9,114.6 259.4,120.1 258.6,126.4Z" fill="#1c59b3"/><path d="M288.4,140.4 278.6,162.4 287.9,172.6 303.9,191.6 307.6,180.1 311.4,173.4 314.9,168.6Z" fill="url(#g37)"/><path d="M277.9,162.4 302.9,191.6 303.6,191.6 278.4,162.1Z" fill="#1f60c1"/><path d="M250.4,150.9 250.1,151.9 275.9,177.4 277.9,177.6 291.1,183.9 302.6,191.4 277.6,162.4 276.4,162.1 276.4,161.6 275.9,161.9 275.9,161.4 275.4,161.6 275.4,161.1 274.1,160.9 274.1,160.4 273.6,160.6 273.6,160.1 273.1,160.4 273.1,159.9 271.9,159.6 271.9,159.1 271.4,159.4 271.4,158.9 270.9,159.1 270.9,158.6 270.4,158.9 270.4,158.4 269.9,158.6 269.9,158.1 269.4,158.4 269.4,157.9 268.9,158.1 268.9,157.6 268.4,157.9 268.4,157.4 267.9,157.6 267.9,157.1 267.4,157.4 267.4,156.9 266.9,157.1 266.9,156.6 266.4,156.9 266.4,156.4 265.9,156.6 263.6,155.6 263.6,155.1 263.1,155.4 263.1,154.9 262.4,155.1 262.4,154.6 261.6,154.6 261.9,154.4 261.1,154.6 261.1,154.1 260.4,154.1 260.6,153.9 259.9,154.1 259.9,153.6 258.6,153.6 258.6,153.1 257.9,153.1 258.1,152.9 257.4,153.1 257.4,152.6 256.6,152.9 256.6,152.4 254.9,152.1 255.4,151.9 254.4,152.1 254.1,151.9 254.6,151.6 253.6,151.9 253.4,151.6 253.9,151.4 252.9,151.6 252.1,151.1 252.4,150.9 250.9,150.9 250.9,150.4Z" fill="url(#g38)"/><path d="M249.9,152.1 248.4,155.9 271.6,178.6 275.6,177.4Z" fill="#1c59b3"/><path d="M257.9,131.1 257.4,131.4 252.6,143.9 252.1,144.1 251.9,145.9 250.9,148.4 250.4,148.6 250.6,148.9 249.1,152.9 248.6,153.1 248.4,154.9 247.4,156.4 247.1,158.1 246.6,158.4 246.4,160.1 245.1,163.4 244.6,163.6 244.6,164.6 244.1,164.9 244.4,165.4 243.9,165.6 243.6,167.4 243.1,167.6 243.4,168.1 240.4,175.6 241.6,173.6Z" fill="#1f60c1"/><path d="M225.4,120.4 219.6,134.4 221.1,146.6 214.1,168.1 224.4,170.4 240.1,175.9 239.9,175.6 240.4,175.4 240.4,174.4 240.9,174.1 243.1,168.1 242.9,167.6 243.4,167.4 243.6,165.6 244.1,165.4 243.9,164.9 244.4,164.6 244.4,163.6 245.4,162.1 246.6,158.6 246.4,158.4 246.9,158.1 247.4,156.6 247.1,156.4 247.6,156.1 248.6,153.4 248.4,153.1 248.9,152.9 250.4,148.9 250.1,148.6 250.6,148.4 252.1,144.4 251.9,144.1 252.4,143.9 257.1,131.4 250.4,127.9 243.1,124.9 228.4,120.6Z" fill="url(#g39)"/><path d="M225.1,120.6 221.4,122.1 220.1,125.4 219.6,134.1Z" fill="#1c59b3"/><path d="M248.4,156.1 240.9,175.4 265.9,202.6 265.9,197.9 266.9,190.6 268.4,185.1 270.4,179.9 271.4,178.6Z" fill="url(#g40)"/><path d="M240.1,175.6 263.4,201.1 265.4,202.6 264.1,200.6 241.4,175.9Z" fill="#1f60c1"/><path d="M213.9,168.6 212.9,172.1 234.1,191.6 235.9,191.6 251.1,196.4 264.6,202.6 240.4,176.1 239.6,176.1 239.6,175.6 239.1,175.9 239.1,175.4 238.4,175.6 238.4,175.1 237.6,175.4 237.6,174.9 236.9,174.9 237.1,174.6 236.4,174.9 236.4,174.4 235.6,174.6 235.6,174.1 234.9,174.1 235.1,173.9 233.6,173.9 233.6,173.4 232.9,173.4 233.1,173.1 232.4,173.4 232.4,172.9 231.6,173.1 231.6,172.6 230.9,172.9 230.9,172.4 230.1,172.6 230.1,172.1 229.4,172.4 229.4,171.9 227.6,171.9 227.4,171.6 227.9,171.4 226.9,171.6 226.9,171.1 226.1,171.4 226.1,170.9 224.6,170.9 224.6,170.4 223.6,170.6 223.6,170.1 222.6,170.4 222.6,169.9 220.6,169.9 220.4,169.6 220.9,169.4 219.6,169.6 219.4,169.4 219.9,169.1 218.6,169.4 218.4,169.1 218.9,168.9 217.6,169.1 217.4,168.9 217.9,168.6 216.4,168.9 216.1,168.6 216.6,168.4 215.1,168.6 214.9,168.4 215.4,168.1Z" fill="url(#g41)"/><path d="M211.6,176.6 230.1,193.4 233.9,191.9 212.9,172.4Z" fill="#1c59b3"/><path d="M220.9,146.4 220.1,146.9 220.4,147.4 217.6,155.9 217.1,156.1 217.4,156.6 216.9,156.9 217.1,157.4 216.6,157.6 216.9,158.1 216.4,158.4 216.6,158.9 215.6,162.1 215.1,162.4 215.4,162.9 214.4,166.1 213.6,167.1 213.9,167.6 213.4,167.9 213.6,168.4 210.9,177.4 210.4,177.6 210.6,178.1 209.9,180.6 209.4,180.9 209.6,181.6 209.1,183.1 208.6,183.4 208.9,183.9 208.4,185.6 207.9,185.9 208.1,186.4 206.4,192.4 205.9,192.6 206.1,193.1Z" fill="#1f5fc0"/><path d="M185.4,139.4 181.9,150.1 184.9,159.9 187.6,165.4 181.6,189.1 192.1,190.6 205.6,193.6 204.9,193.4 205.9,193.1 205.6,192.6 206.1,192.4 207.9,186.4 207.6,185.9 208.1,185.6 208.6,183.9 208.4,183.4 208.9,183.1 209.4,181.6 209.1,180.9 209.6,180.6 210.4,178.1 210.1,177.6 210.6,177.4 213.4,168.4 213.1,167.9 213.6,167.6 213.4,167.1 213.9,166.9 215.1,162.9 214.9,162.4 215.6,161.4 216.4,158.9 216.1,158.4 216.6,158.1 216.4,157.6 216.9,157.4 216.6,156.9 217.1,156.6 216.9,156.1 217.4,155.9 220.1,147.4 219.9,146.9 220.4,146.6 203.4,141.6 187.9,139.1Z" fill="url(#g42)"/><path d="M184.9,139.6 181.9,141.1 181.1,142.4 181.9,149.4Z" fill="#1c58b2"/><path d="M211.4,176.6 206.6,193.1 230.1,217.6 229.1,213.4 228.4,206.9 228.6,199.4 229.9,193.4Z" fill="url(#g43)"/><path d="M205.6,193.4 226.6,215.4 229.4,217.9 229.9,217.9 206.4,193.1Z" fill="#1e5fc0"/><path d="M181.6,189.4 182.4,189.1 181.4,189.9 179.9,197.1 195.6,210.9 197.9,210.6 213.6,213.4 229.4,218.1 212.9,201.4 211.6,199.6 205.9,193.9 204.9,193.6 205.4,193.4 202.9,193.4 202.6,193.1 203.1,192.9 201.9,193.1 201.6,192.9 202.1,192.6 199.6,192.6 199.4,192.4 199.9,192.1 198.6,192.4 198.4,192.1 198.9,191.9 196.4,191.9 196.1,191.6 196.6,191.4 193.6,191.4 193.4,191.1 193.9,190.9 192.4,191.1 192.1,190.9 192.6,190.6 189.6,190.6 189.4,190.4 189.9,190.1 187.9,190.4 187.9,189.9 188.6,189.9 185.9,190.1 185.6,189.9 186.4,189.6 183.9,189.9 183.6,189.6 184.4,189.4Z" fill="url(#g44)"/><path d="M179.6,197.4 178.6,201.6 191.9,212.9 195.4,210.9Z" fill="#1c58b2"/><path d="M187.1,165.6 182.9,182.9 182.4,183.1 182.6,183.9 181.1,190.4 180.6,190.4 180.9,191.1 180.4,193.4 179.9,193.6 180.1,194.4 179.6,196.6 179.1,196.9 179.4,197.6 178.4,200.1 178.4,202.6 177.6,203.4 177.9,204.1 177.6,205.4 177.1,205.6 177.4,206.4 177.1,207.6 176.6,207.9 176.9,208.6 175.4,214.6 175.9,213.9 179.1,198.4Z" fill="#1e5fbf"/><path d="M149.9,162.6 149.1,163.1 147.4,170.9 150.4,177.4 153.6,182.9 158.1,188.4 153.9,213.6 175.1,215.1 176.6,208.6 176.4,207.9 176.9,207.6 177.1,206.4 176.9,205.6 177.4,205.4 177.6,204.1 177.4,203.4 178.1,202.6 178.1,200.1 178.6,199.6 179.1,197.6 178.9,196.9 179.4,196.6 179.9,194.4 179.6,193.6 180.1,193.4 182.4,183.9 182.1,183.1 182.6,182.9 186.6,165.9 178.4,164.4 161.9,162.6Z" fill="url(#g45)"/><path d="M148.9,163.1 145.9,165.4 145.9,166.9 147.1,170.4Z" fill="#1c58b1"/><path d="M178.6,201.9 175.9,214.6 197.6,236.9 194.9,230.9 192.9,224.9 191.4,213.9 191.9,213.1Z" fill="url(#g46)"/><path d="M175.6,214.6 175.4,215.1 179.6,219.9 193.9,234.4 197.4,237.4 197.6,237.1Z" fill="#1e5fbf"/><path d="M153.9,213.9 151.9,226.6 160.6,234.1 172.1,234.1 178.9,234.6 188.6,235.9 197.1,237.6 175.4,215.4 172.9,215.4 172.9,214.9 173.6,214.9 170.4,215.1 170.4,214.6 171.1,214.6 168.1,214.9 168.1,214.4 168.9,214.4 165.4,214.6 165.4,214.1 166.4,214.1 161.4,214.4 161.4,213.9 162.6,213.9Z" fill="url(#g47)"/><path d="M151.9,226.9 151.1,230.9 151.9,232.1 157.6,236.9 160.9,234.4Z" fill="#1c58b1"/><path d="M157.9,188.6 157.4,191.6 156.9,192.1 157.1,193.1 156.4,197.4 155.9,197.9 156.1,198.9 155.6,201.6 155.1,202.1 155.4,203.4 153.1,215.6 149.6,239.6Z" fill="#1e5ebe"/><path d="M118.4,190.4 117.4,196.6 118.9,199.1 125.9,207.4 134.1,214.6 131.6,240.9 149.4,240.4 146.9,240.1 149.4,239.9 151.4,225.4 155.1,203.4 154.9,202.1 155.6,200.4 155.6,197.9 156.1,197.4 157.4,189.1 136.6,188.4 123.4,189.4Z" fill="url(#g48)"/><path d="M118.1,190.6 115.6,193.4 117.1,196.1Z" fill="#1c57b0"/><path d="M151.1,231.6 149.9,239.4 169.4,259.9 162.4,249.9 158.9,242.4 157.4,238.1 157.6,237.1Z" fill="url(#g49)"/><path d="M149.9,239.6 149.6,240.1 150.4,241.4 169.1,260.6 169.6,260.1Z" fill="#1e5ebe"/><path d="M131.6,241.1 130.1,260.6 131.4,261.9 134.6,261.1 147.6,260.1 160.9,260.1 168.9,260.6 153.9,245.4 149.4,240.1 147.1,240.1 149.4,240.1 149.4,240.6 137.6,240.4 139.1,240.4 139.1,240.9 133.4,240.6 134.9,240.6 134.9,241.1Z" fill="url(#g50)"/><path d="M130.1,261.1 130.1,263.4 131.1,262.4 131.1,261.9Z" fill="#1c57b0"/><path d="M133.6,215.4 113.6,217.1 95.4,220.6 93.9,221.4 93.4,227.1 103.1,235.6 116.1,243.9 115.9,269.9 116.6,270.1 115.9,270.4 129.4,268.4 129.1,266.1 129.6,265.1 129.6,258.4 130.1,257.4 130.1,251.1 130.6,250.4 130.4,247.9 130.9,247.1 131.6,237.6 131.4,235.4 131.9,234.6 132.4,228.9 132.1,226.9 132.6,226.1 133.1,221.1 132.9,219.1 133.4,218.4Z" fill="url(#g51)"/><path d="M93.6,221.6 91.9,224.6 92.1,225.9 93.1,226.9Z" fill="#1c56ae"/><path d="M129.6,267.6 129.6,268.4 133.9,273.1 133.9,273.6 142.4,282.6 142.4,283.1 145.4,285.9 145.4,286.4 146.4,286.9 145.1,284.9Z" fill="#1e5dbc"/><path d="M115.9,270.1 116.6,270.4 115.9,270.6 116.1,290.9 127.9,288.6 146.1,287.1 135.4,275.6 135.6,275.4 133.6,273.6 133.6,273.1 129.6,268.6 127.6,268.4 128.1,268.4 128.1,268.9 125.9,268.6 126.4,268.6 126.4,269.1 122.1,269.1 122.6,269.1 122.6,269.6 118.6,269.6 119.1,269.6 119.1,270.1 117.4,269.9 117.9,270.1 117.6,270.4Z" fill="url(#g52)"/><path d="M115.9,244.4 115.1,244.9 106.6,246.1 95.1,248.9 77.9,254.4 76.6,255.4 76.6,260.4 77.4,261.1 92.9,269.9 105.4,274.9 107.1,301.1 115.9,298.6 115.9,293.9 115.4,291.1 115.4,250.6Z" fill="url(#g53)"/><path d="M76.4,255.9 75.1,258.6 76.4,260.4Z" fill="#1b55ac"/><path d="M116.1,298.1 116.1,299.1 117.6,300.6 117.4,300.9 118.9,302.4 118.6,302.6 119.6,303.4 123.4,308.4 123.1,308.6 125.1,310.6 124.9,310.9 129.4,316.1 129.4,315.4 122.6,307.1Z" fill="#1e5cba"/><path d="M115.6,298.6 115.6,299.1 114.4,298.9 114.9,299.1 113.9,299.6 111.6,299.6 112.1,299.9 110.6,299.9 111.1,300.1 110.9,300.4 109.6,300.1 110.1,300.4 108.1,301.1 107.1,300.9 108.9,320.9 119.1,318.1 129.1,316.4Z" fill="url(#g54)"/><path d="M104.9,275.6 87.9,281.4 79.4,284.9 68.6,290.1 67.4,291.4 67.9,295.9 70.9,297.4 84.4,302.6 102.1,307.4 106.1,332.1 109.4,330.9 109.6,329.4 108.6,319.6 108.1,318.9 108.4,317.1 106.4,293.4 105.9,292.6 106.1,290.1 105.6,289.4 105.9,286.4 105.4,285.6 105.6,282.6Z" fill="url(#g55)"/><path d="M67.1,292.4 66.9,294.9 67.6,295.6Z" fill="#1b54aa"/><path d="M109.9,330.4 110.6,331.9 110.4,332.1 110.9,332.4 110.6,332.6 111.1,332.9 115.1,340.1 115.1,340.9 115.9,341.4 119.1,346.9 113.9,338.1Z" fill="#1d5bb8"/><path d="M108.6,330.9 108.9,331.1 108.1,331.6 107.4,331.4 107.6,331.6 106.9,332.1 106.1,331.9 106.1,333.6 109.6,350.4 118.6,347.6 119.1,347.1 115.6,341.4 114.9,340.9 115.1,340.6 110.9,332.9 110.4,332.6 110.6,332.4 110.1,332.1 109.9,330.9Z" fill="url(#g56)"/><path d="M102.1,308.4 101.9,308.1 94.6,311.4 84.4,316.6 69.9,325.6 67.4,328.1 67.9,332.1 69.4,333.1 84.1,336.9 107.1,340.1 102.6,311.6 102.1,311.1Z" fill="url(#g57)"/><path d="M107.1,340.4 91.1,351.4 77.6,363.4 76.6,365.4 78.1,368.9 80.6,369.9 97.9,371.6 114.9,371.6Z" fill="url(#g58)"/><path d="M120.6,372.1 106.1,386.1 96.4,398.6 95.6,400.6 98.1,404.1 99.6,404.6 113.1,404.6 121.6,404.1 130.9,402.9Z" fill="url(#g59)"/><path d="M142.6,401.9 136.6,409.6 131.9,416.9 124.4,431.9 124.4,433.6 127.6,436.6 130.6,436.9 150.1,433.9 155.6,432.4Z" fill="url(#g60)"/><path d="M172.6,428.1 165.6,444.1 163.6,450.6 161.6,459.9 162.1,462.1 166.4,464.6 168.6,464.6 188.4,458.9Z" fill="url(#g61)"/><path d="M209.6,450.4 209.9,451.1 207.9,458.6 206.6,466.6 206.4,476.6 206.9,483.9 208.6,485.9 212.4,487.1 213.6,487.1 220.9,484.4 228.4,480.6Z" fill="url(#g62)"/><path d="M252.9,467.1 254.1,484.9 255.6,492.1 258.1,500.1 259.6,501.9 264.9,503.1 266.4,502.9 274.1,498.1 274.4,497.4Z" fill="url(#g63)"/><path d="M300.6,478.1 305.9,494.6 309.6,502.1 314.1,509.6 315.9,510.9 321.9,511.4 324.1,510.1 325.1,508.9Z" fill="url(#g64)"/><path d="M351.1,482.6 358.4,494.9 365.1,503.6 372.9,511.6 373.9,512.1 376.6,511.9Z" fill="url(#g65)"/><path d="M582.6,432.9 579.1,442.9 580.6,442.4 583.9,439.6 584.1,437.9Z" fill="url(#g66)"/><path d="M597.4,378.4 602.4,388.1 605.9,396.6 617.9,407.9 617.9,406.1 616.1,402.6 609.1,391.9 604.1,385.6Z" fill="url(#g67)"/><path d="M606.1,397.1 602.6,411.1 613.6,411.4 615.1,410.9 617.6,407.9Z" fill="url(#g68)"/><path d="M616.1,346.9 618.1,354.6 619.9,364.9 629.1,370.6 637.4,376.9 640.9,376.1 642.9,372.9 642.1,370.6 630.6,358.4 623.9,352.6Z" fill="url(#g69)"/><path d="M619.9,365.1 617.6,378.4 629.6,377.9 637.1,376.9 629.1,370.9Z" fill="url(#g70)"/><path d="M626.6,314.6 625.6,332.4 642.6,340.1 646.1,342.4 655.9,340.4 657.4,339.4 658.1,335.4 656.6,333.6 642.9,323.6 635.1,318.9Z" fill="url(#g71)"/><path d="M625.4,332.4 624.4,345.6 635.6,344.6 646.4,342.6 642.6,340.4Z" fill="url(#g72)"/></g>
<path d="M378.3,128.2 375.5,182.5" stroke="#25b898" stroke-width="1.1" fill="none" opacity="0.75"/></g>
<path fill-rule="evenodd" d="M702.4,278.4 701.5,272.3 700.3,266.2 699.0,260.1 697.4,254.2 695.7,248.2 693.7,242.4 691.5,236.5 689.1,230.8 686.5,225.1 683.8,219.5 680.8,214.0 677.6,208.5 674.3,203.2 670.7,197.9 667.0,192.7 663.1,187.6 659.1,182.5 654.9,177.6 650.5,172.7 645.9,168.0 641.2,163.3 636.4,158.8 631.4,154.3 626.3,150.0 621.0,145.7 615.6,141.6 610.0,137.5 604.4,133.6 598.6,129.8 592.7,126.1 586.6,122.5 580.5,119.0 574.2,115.6 567.9,112.3 561.4,109.2 554.9,106.2 548.2,103.3 541.5,100.5 534.6,97.8 527.7,95.2 520.8,92.8 513.7,90.5 506.6,88.3 499.4,86.2 492.1,84.3 484.8,82.5 477.4,80.8 470.0,79.2 462.5,77.8 455.0,76.4 447.4,75.2 439.8,74.2 432.1,73.2 424.5,72.4 416.7,71.7 409.0,71.1 401.3,70.7 393.5,70.4 385.7,70.2 377.9,70.1 370.1,70.2 362.3,70.4 354.5,70.7 346.7,71.1 338.9,71.7 331.1,72.4 323.4,73.2 315.6,74.2 307.9,75.2 300.2,76.4 292.5,77.8 284.9,79.2 277.3,80.8 269.7,82.5 262.2,84.3 254.7,86.2 247.3,88.3 239.9,90.5 232.6,92.8 225.3,95.2 218.1,97.8 211.0,100.5 204.0,103.3 197.0,106.2 190.1,109.2 183.3,112.3 176.6,115.6 169.9,119.0 163.4,122.5 157.0,126.1 150.7,129.8 144.4,133.6 138.3,137.5 132.3,141.6 126.5,145.7 120.7,150.0 115.1,154.3 109.6,158.8 104.3,163.3 99.1,168.0 94.0,172.7 89.1,177.6 84.3,182.5 79.7,187.6 75.2,192.7 71.0,197.9 66.8,203.2 62.9,208.5 59.1,214.0 55.5,219.5 52.1,225.1 48.9,230.8 45.9,236.5 43.1,242.4 40.4,248.2 38.0,254.2 35.8,260.1 33.8,266.2 32.0,272.3 30.4,278.4 29.0,284.6 27.9,290.8 27.0,297.0 26.3,303.3 25.9,309.6 25.7,315.9 25.7,322.2 26.0,328.6 26.5,334.9 27.2,341.3 28.2,347.6 29.5,354.0 31.0,360.3 32.7,366.6 34.7,372.9 37.0,379.2 39.5,385.4 42.3,391.6 45.3,397.8 48.5,403.9 52.1,410.0 55.8,415.9 59.9,421.9 64.2,427.7 68.7,433.5 73.5,439.2 78.5,444.8 83.8,450.3 89.3,455.8 95.0,461.1 101.0,466.3 107.2,471.4 113.7,476.3 120.3,481.2 127.2,485.9 134.3,490.4 141.6,494.9 149.1,499.1 156.8,503.3 164.7,507.2 172.8,511.1 181.1,514.7 189.5,518.2 198.1,521.5 206.9,524.6 215.8,527.5 224.9,530.3 234.1,532.8 243.4,535.2 252.8,537.4 262.3,539.3 272.0,541.1 281.7,542.7 291.5,544.1 301.4,545.2 311.3,546.2 321.3,546.9 331.3,547.4 341.4,547.7 351.4,547.9 361.5,547.7 371.6,547.4 381.7,546.9 391.8,546.2 401.8,545.2 411.8,544.1 421.8,542.7 431.7,541.1 441.5,539.3 451.3,537.4 460.9,535.2 470.5,532.8 480.0,530.3 489.3,527.5 498.6,524.6 507.7,521.5 516.6,518.2 525.5,514.7 534.1,511.1 542.7,507.2 551.0,503.3 559.2,499.1 567.1,494.9 574.9,490.4 582.6,485.9 590.0,481.2 597.2,476.3 604.2,471.4 610.9,466.3 617.5,461.1 623.8,455.8 629.9,450.3 635.8,444.8 641.5,439.2 646.9,433.5 652.1,427.7 657.0,421.9 661.7,415.9 666.1,410.0 670.3,403.9 674.3,397.8 677.9,391.6 681.4,385.4 684.6,379.2 687.5,372.9 690.2,366.6 692.7,360.3 694.9,354.0 696.8,347.6 698.6,341.3 700.0,334.9 701.2,328.6 702.2,322.2 702.9,315.9 703.4,309.6 703.7,303.3 703.7,297.0 703.5,290.8 703.0,284.6ZM664.0,300.3 664.0,298.5 663.0,297.4 661.4,296.5 654.4,292.6 646.7,288.9 638.0,285.3 628.7,282.0 628.6,281.2 637.6,278.1 645.7,274.8 652.8,271.3 659.1,267.7 660.6,266.8 661.4,265.8 661.0,264.0 660.7,262.2 659.4,261.3 657.7,260.6 650.1,257.7 641.8,255.1 632.7,252.7 622.9,250.5 622.6,249.8 630.4,245.8 637.5,241.6 643.4,237.4 648.5,233.2 649.7,232.3 650.3,231.2 649.5,229.5 648.7,227.8 647.3,227.1 645.4,226.6 637.5,224.7 629.0,223.1 619.6,221.9 609.7,221.0 609.3,220.3 615.8,215.5 621.5,210.7 626.2,206.0 630.1,201.4 631.0,200.3 631.3,199.2 630.1,197.7 629.0,196.1 627.5,195.6 625.6,195.4 617.5,194.4 609.0,193.8 599.7,193.7 589.9,194.0 589.4,193.4 594.5,188.0 598.8,182.7 602.2,177.7 604.8,172.8 605.4,171.6 605.4,170.5 603.9,169.2 602.4,167.9 600.8,167.5 599.0,167.5 591.0,167.5 582.6,167.9 573.6,168.8 564.3,170.2 563.6,169.6 567.3,163.9 570.2,158.3 572.2,153.1 573.5,148.0 573.8,146.9 573.5,145.8 571.8,144.7 570.0,143.6 568.4,143.4 566.6,143.6 558.9,144.5 550.9,145.8 542.5,147.7 533.7,150.0 533.0,149.6 535.1,143.6 536.5,137.9 537.2,132.6 537.3,127.6 537.3,126.4 536.7,125.4 534.8,124.5 532.8,123.6 531.2,123.6 529.5,124.0 522.3,125.7 514.8,127.9 507.0,130.7 499.1,133.9 498.3,133.6 498.8,127.5 498.9,121.8 498.2,116.6 497.1,111.7 496.8,110.6 496.0,109.7 493.9,109.0 491.8,108.4 490.2,108.5 488.6,109.1 482.0,111.6 475.2,114.5 468.3,118.0 461.4,122.0 460.5,121.8 459.6,115.9 458.2,110.3 456.3,105.3 453.9,100.7 453.4,99.6 452.4,98.8 450.2,98.4 447.9,98.0 446.4,98.3 445.0,99.1 439.1,102.2 433.2,105.8 427.3,110.0 421.5,114.7 420.5,114.5 418.1,108.8 415.4,103.6 412.3,98.9 408.8,94.6 408.0,93.6 406.9,93.0 404.6,92.8 402.2,92.7 400.8,93.2 399.7,94.0 394.6,97.7 389.7,101.9 384.9,106.6 380.3,111.8 379.3,111.8 375.5,106.5 371.5,101.7 367.2,97.4 362.8,93.6 361.7,92.7 360.4,92.2 358.1,92.3 355.8,92.4 354.5,93.0 353.5,94.0 349.4,98.2 345.5,102.8 342.0,108.0 338.7,113.6 337.7,113.7 332.6,108.9 327.4,104.6 322.1,100.9 316.7,97.7 315.5,96.9 314.0,96.5 311.7,96.9 309.4,97.2 308.3,98.0 307.6,99.1 304.5,103.6 301.8,108.6 299.6,114.1 297.7,120.0 296.7,120.2 290.5,116.0 284.2,112.4 277.9,109.3 271.7,106.7 270.2,106.1 268.7,105.9 266.5,106.5 264.3,107.1 263.3,108.0 262.9,109.1 261.0,113.9 259.5,119.1 258.6,124.8 258.2,130.9 257.3,131.2 249.9,127.8 242.6,124.8 235.6,122.5 228.6,120.7 227.0,120.2 225.4,120.2 223.3,121.0 221.2,121.9 220.5,122.9 220.4,124.0 219.6,129.0 219.5,134.3 220.0,140.0 221.1,146.1 220.3,146.5 212.0,143.9 203.9,141.9 196.1,140.4 188.6,139.3 186.9,139.1 185.2,139.2 183.3,140.3 181.4,141.4 181.0,142.4 181.1,143.6 181.6,148.6 182.8,153.9 184.8,159.5 187.4,165.3 186.7,165.8 177.6,164.3 168.9,163.2 160.6,162.6 152.7,162.4 150.8,162.3 149.2,162.7 147.5,164.0 145.9,165.3 145.6,166.4 146.1,167.5 147.9,172.4 150.4,177.5 153.9,182.9 158.1,188.3 157.4,188.9 147.8,188.5 138.6,188.4 130.0,188.8 121.8,189.5 119.9,189.7 118.3,190.2 117.0,191.7 115.6,193.2 115.6,194.3 116.4,195.4 119.5,200.1 123.4,204.8 128.3,209.7 134.0,214.7 133.5,215.3 123.5,216.0 114.0,217.0 105.3,218.4 97.2,220.1 95.2,220.5 93.7,221.3 92.7,222.9 91.7,224.5 92.0,225.6 93.1,226.6 97.5,230.9 102.7,235.2 109.0,239.5 116.1,243.7 115.7,244.4 105.7,246.3 96.2,248.5 87.6,250.9 79.6,253.6 77.8,254.3 76.4,255.2 75.8,256.9 75.1,258.7 75.8,259.8 77.1,260.6 82.7,264.4 89.2,268.0 96.8,271.5 105.1,274.8 105.0,275.6 95.1,278.7 85.9,282.0 77.7,285.5 70.2,289.2 68.4,290.1 67.3,291.1 67.0,293.0 66.8,294.8 67.8,295.8 69.4,296.5 76.1,299.5 83.7,302.3 92.4,304.9 101.9,307.1 101.9,307.9 92.6,312.2 84.0,316.7 76.4,321.2 69.6,325.9 68.0,327.0 67.1,328.2 67.3,330.0 67.6,331.9 68.8,332.7 70.6,333.2 78.4,335.4 86.9,337.2 96.5,338.6 106.8,339.7 107.0,340.4 98.6,345.9 90.9,351.5 84.3,357.0 78.4,362.5 77.1,363.8 76.4,365.1 77.2,366.9 77.9,368.7 79.4,369.4 81.4,369.7 89.9,370.8 99.2,371.5 109.4,371.7 120.2,371.4 120.6,372.1 113.3,378.7 106.9,385.2 101.5,391.5 96.9,397.7 95.9,399.2 95.5,400.6 96.7,402.3 98.0,404.0 99.7,404.5 101.8,404.5 110.9,404.5 120.5,404.0 131.0,402.8 142.0,401.1 142.6,401.8 136.8,409.2 131.9,416.6 128.0,423.6 124.9,430.3 124.2,431.9 124.2,433.4 125.9,434.9 127.6,436.5 129.5,436.7 131.6,436.4 140.9,435.2 150.7,433.4 161.0,430.8 171.8,427.6 172.6,428.2 168.6,436.4 165.5,444.3 163.3,451.8 161.9,458.9 161.5,460.6 161.9,462.0 164.0,463.3 166.1,464.6 168.1,464.6 170.2,464.0 179.4,461.5 188.8,458.4 198.7,454.5 208.8,449.9 209.8,450.4 207.8,459.0 206.6,467.2 206.3,474.9 206.7,482.1 206.8,483.8 207.5,485.1 210.0,486.1 212.4,487.1 214.4,486.8 216.4,486.0 225.1,482.3 233.8,478.0 242.8,472.7 251.8,466.9 252.9,467.2 253.1,475.9 254.0,484.2 255.6,491.7 257.8,498.8 258.3,500.5 259.4,501.7 262.1,502.3 264.9,503.0 266.8,502.4 268.6,501.3 276.4,496.5 284.1,491.0 291.8,484.7 299.3,477.7 300.5,477.9 302.9,486.4 305.8,494.4 309.3,501.6 313.3,508.2 314.2,509.8 315.6,510.8 318.5,511.1 321.4,511.3 323.2,510.5 324.7,509.2 331.2,503.4 337.6,497.0 343.6,489.8 349.4,481.9 350.6,481.9 355.1,489.9 360.0,497.3 365.3,503.9 370.9,509.8 372.2,511.2 373.9,512.0 376.8,511.9 379.7,511.7 381.3,510.7 382.5,509.2 387.5,502.7 392.1,495.6 396.4,487.7 400.1,479.2 401.3,479.1 407.8,486.3 414.4,492.8 421.3,498.5 428.2,503.5 429.9,504.7 431.7,505.2 434.5,504.7 437.4,504.1 438.7,502.9 439.4,501.3 442.8,494.3 445.6,486.8 447.8,478.5 449.4,469.8 450.6,469.5 458.6,475.7 466.8,481.1 474.9,485.7 482.9,489.6 484.8,490.5 486.7,490.8 489.3,489.9 492.0,489.0 493.0,487.7 493.3,486.0 494.8,478.8 495.8,471.1 495.9,462.8 495.3,454.2 496.4,453.8 505.7,458.6 515.0,462.8 524.0,466.2 532.7,468.9 534.8,469.5 536.7,469.6 539.1,468.3 541.4,467.1 542.0,465.7 542.0,464.0 541.7,456.8 540.7,449.3 538.8,441.3 536.1,433.0 537.0,432.5 547.3,435.9 557.3,438.8 566.8,440.9 575.9,442.3 578.0,442.7 579.9,442.5 581.9,441.0 583.8,439.5 584.1,438.0 583.6,436.4 581.6,429.5 578.8,422.4 575.1,415.0 570.5,407.4 571.2,406.7 582.0,408.7 592.3,410.2 601.9,410.9 611.0,411.2 613.2,411.2 614.9,410.8 616.5,409.1 617.9,407.4 617.8,406.0 617.0,404.5 613.4,398.2 609.0,391.7 603.6,385.0 597.4,378.2 597.9,377.5 608.7,378.1 619.0,378.2 628.4,377.7 637.2,376.8 639.2,376.6 640.8,376.0 641.9,374.2 642.9,372.3 642.4,371.0 641.3,369.7 636.3,364.0 630.6,358.3 623.7,352.6 616.1,346.9 616.5,346.1 627.0,345.3 636.8,344.2 645.7,342.5 653.9,340.6 655.8,340.1 657.1,339.3 657.7,337.5 658.2,335.6 657.5,334.4 656.1,333.2 650.0,328.4 643.1,323.7 635.2,319.0 626.5,314.4 626.7,313.6 636.5,311.6 645.7,309.3 653.8,306.7 661.1,303.8 662.8,303.1 663.9,302.2Z" fill="#4a7aab"/>
<path fill-rule="evenodd" d="M76.4,255.2 75.1,258.7 75.7,286.4 68.4,290.0 67.2,291.1 66.8,294.8 70.3,325.3 68.0,326.9 67.0,328.2 67.5,331.9 73.6,360.9 82.5,400.2 83.6,403.6 84.8,404.4 88.6,405.5 94.1,422.1 92.8,429.6 92.3,436.6 93.8,440.3 95.2,441.0 105.4,442.4 112.6,442.9 118.0,455.4 112.7,466.8 111.2,470.5 110.9,472.0 113.3,475.4 114.9,475.9 125.7,475.9 134.9,475.4 144.9,474.2 149.2,482.0 142.0,495.1 149.1,499.1 160.6,505.2 164.0,504.5 174.0,502.0 184.2,498.8 184.9,499.3 181.2,507.4 178.8,513.7 189.5,518.2 198.1,521.5 209.9,525.6 219.8,520.9 220.7,521.4 219.1,528.5 234.1,532.8 243.4,535.2 259.5,538.8 261.1,537.7 262.1,538.0 262.1,539.3 272.0,541.1 281.7,542.7 291.5,544.1 301.4,545.2 311.3,546.2 321.3,546.9 331.3,547.4 341.4,547.7 351.4,547.9 361.5,547.7 371.6,547.4 381.7,546.9 391.8,546.2 401.8,545.2 411.8,544.1 421.8,542.7 431.7,541.1 441.5,539.3 451.3,537.4 460.9,535.2 470.5,532.8 480.0,530.3 489.3,527.5 498.6,524.6 507.7,521.5 516.6,518.2 525.5,514.7 534.1,511.1 542.7,507.2 551.0,503.3 559.2,499.1 567.1,494.9 574.9,490.4 582.6,485.9 590.0,481.2 597.2,476.3 604.2,471.4 610.9,466.3 618.0,460.6 621.9,449.2 632.2,448.1 634.6,445.9 635.8,443.8 643.5,413.0 648.2,411.8 649.6,411.0 650.7,407.3 655.8,374.4 656.2,374.0 656.8,367.1 658.8,351.0 658.9,343.5 658.7,339.5 659.7,317.9 662.2,310.2 663.9,302.2 664.1,298.5 663.1,297.4 657.9,294.5 663.0,297.4 664.0,298.5 663.9,302.2 662.8,303.1 653.8,306.7 645.7,309.3 636.5,311.6 626.7,313.6 626.5,314.4 635.2,319.0 643.1,323.7 650.0,328.4 657.5,334.4 658.2,335.6 657.1,339.3 655.8,340.1 645.7,342.5 636.8,344.2 627.0,345.3 616.5,346.1 616.1,346.9 623.7,352.6 630.6,358.3 636.3,364.0 642.4,371.0 642.9,372.3 640.8,376.0 639.2,376.6 628.4,377.7 619.0,378.2 608.7,378.1 597.9,377.5 597.4,378.2 603.6,385.0 609.0,391.7 613.4,398.2 617.8,406.0 617.9,407.4 614.9,410.8 613.2,411.2 601.9,410.9 592.3,410.2 582.0,408.7 571.2,406.7 570.5,407.4 575.1,415.0 578.8,422.4 581.6,429.5 584.1,438.0 583.8,439.5 579.9,442.5 578.0,442.7 566.8,440.9 557.3,438.8 547.3,435.9 537.0,432.5 536.1,433.0 538.8,441.3 540.7,449.3 541.7,456.8 542.0,465.7 541.4,467.1 536.7,469.6 534.8,469.5 524.0,466.2 515.0,462.8 505.7,458.6 496.4,453.8 495.3,454.2 495.9,462.8 495.8,471.1 494.8,478.8 493.0,487.7 492.0,489.0 486.7,490.8 484.8,490.5 474.9,485.7 466.8,481.1 458.6,475.7 450.6,469.5 449.4,469.8 447.8,478.5 445.6,486.8 442.8,494.3 438.7,502.9 437.4,504.1 431.7,505.2 429.9,504.7 421.3,498.5 414.4,492.8 407.8,486.3 401.3,479.1 400.1,479.2 396.4,487.7 392.1,495.6 387.5,502.7 381.3,510.7 379.7,511.7 373.9,512.0 372.2,511.2 365.3,503.9 360.0,497.3 355.1,489.9 350.6,481.9 349.4,481.9 343.6,489.8 337.6,497.0 331.2,503.4 323.2,510.5 321.4,511.3 315.6,510.8 314.2,509.8 309.3,501.6 305.8,494.4 302.9,486.4 300.5,477.9 299.3,477.7 291.8,484.7 284.1,491.0 276.4,496.5 266.8,502.4 264.9,503.0 259.4,501.7 258.3,500.5 255.6,491.7 254.0,484.2 253.1,475.9 252.9,467.2 251.8,466.9 242.8,472.7 233.8,478.0 225.1,482.3 214.4,486.8 212.4,487.1 207.5,485.1 206.8,483.8 206.3,474.9 206.6,467.2 207.8,459.0 209.8,450.4 208.8,449.9 198.7,454.5 188.8,458.4 179.4,461.5 168.1,464.6 166.1,464.6 161.9,462.0 161.5,460.6 163.3,451.8 165.5,444.3 168.6,436.4 172.6,428.2 171.8,427.6 161.0,430.8 150.7,433.4 140.9,435.2 129.5,436.7 127.6,436.5 124.2,433.4 124.2,431.9 128.0,423.6 131.9,416.6 136.8,409.2 142.6,401.8 142.0,401.1 131.0,402.8 120.5,404.0 110.9,404.5 99.7,404.5 98.0,404.0 95.5,400.6 95.9,399.2 101.5,391.5 106.9,385.2 113.3,378.7 120.6,372.1 120.2,371.4 109.4,371.7 99.2,371.5 89.9,370.8 79.4,369.4 77.9,368.7 76.4,365.1 77.1,363.8 84.3,357.0 90.9,351.5 98.6,345.9 107.0,340.4 106.8,339.7 96.5,338.6 86.9,337.2 78.4,335.4 68.8,332.7 67.6,331.9 67.1,328.2 68.0,327.0 76.4,321.2 84.0,316.7 92.6,312.2 101.9,307.9 101.9,307.1 92.4,304.9 83.7,302.3 76.1,299.5 67.8,295.8 66.8,294.8 67.3,291.1 68.4,290.1 77.7,285.5 85.9,282.0 95.1,278.7 105.0,275.6 105.1,274.8 96.8,271.5 89.2,268.0 82.7,264.4 75.8,259.8 75.1,258.7 76.4,255.2 77.8,254.3 83.0,252.5 77.8,254.2ZM652.9,291.8 652.4,282.4 657.2,274.2 661.4,265.8 660.7,262.2 659.4,261.3 650.1,257.7 641.8,255.0 637.7,253.9 637.2,249.7 646.7,236.8 649.5,232.4 643.4,237.4 637.5,241.6 630.4,245.8 622.6,249.8 622.9,250.5 632.7,252.7 641.8,255.1 650.1,257.7 659.4,261.3 660.7,262.2 661.4,265.8 660.6,266.8 652.8,271.3 645.7,274.8 637.6,278.1 628.6,281.2 628.7,282.0 638.0,285.3 646.7,288.9 653.8,292.3ZM650.3,231.2 648.7,227.8 647.3,227.0 637.5,224.7 629.0,223.1 625.3,222.6 629.0,223.1 637.5,224.7 647.3,227.1 648.7,227.8 650.3,231.2 650.1,231.5ZM615.1,221.4 614.9,220.7 631.1,200.3 631.3,199.2 629.0,196.1 627.5,195.5 617.5,194.4 609.0,193.8 599.7,193.7 590.2,193.9 598.9,182.8 602.2,177.7 605.5,171.7 605.4,170.5 602.5,167.8 600.9,167.4 591.0,167.5 582.6,167.9 573.6,168.8 564.3,170.1 563.7,169.6 567.3,163.9 570.2,158.3 572.2,153.1 573.9,146.9 573.6,145.8 570.1,143.5 568.4,143.3 558.9,144.4 550.9,145.7 542.4,147.6 533.7,150.0 533.0,149.6 535.1,143.6 536.6,137.9 537.2,132.6 537.3,126.4 536.8,125.4 532.8,123.6 531.2,123.6 522.2,125.7 514.8,127.8 507.0,130.6 499.1,133.8 498.3,133.5 498.9,127.5 498.9,121.8 498.3,116.6 496.8,110.6 496.0,109.6 491.8,108.3 490.2,108.5 482.0,111.5 475.2,114.4 468.3,118.0 461.4,122.0 460.5,121.8 459.6,115.9 458.2,110.3 456.3,105.3 453.4,99.6 452.4,98.8 447.9,97.9 446.4,98.3 439.1,102.1 433.2,105.7 427.3,109.9 421.5,114.6 420.5,114.5 418.2,108.8 415.4,103.5 412.3,98.9 408.1,93.6 406.9,92.9 402.2,92.6 400.8,93.1 394.6,97.7 389.6,101.8 384.8,106.6 380.2,111.8 379.3,111.8 375.6,106.5 371.5,101.6 367.3,97.4 361.8,92.7 360.4,92.1 355.7,92.4 354.5,93.0 349.4,98.2 345.5,102.8 341.9,108.0 338.7,113.6 337.7,113.7 332.7,108.9 327.5,104.6 322.2,100.9 315.5,96.9 314.0,96.5 309.4,97.2 308.3,98.0 304.5,103.6 302.8,106.9 304.5,103.6 308.3,98.0 309.4,97.2 314.0,96.5 315.5,96.9 322.1,100.9 327.4,104.6 332.6,108.9 337.7,113.7 338.7,113.6 342.0,108.0 345.5,102.8 349.4,98.2 354.5,93.0 355.8,92.4 360.4,92.2 361.7,92.7 367.2,97.4 371.5,101.7 375.5,106.5 379.3,111.8 380.3,111.8 384.9,106.6 389.7,101.9 394.6,97.7 400.8,93.2 402.2,92.7 406.9,93.0 408.0,93.6 412.3,98.9 415.4,103.6 418.1,108.8 420.5,114.5 421.5,114.7 427.3,110.0 433.2,105.8 439.1,102.2 446.4,98.3 447.9,98.0 452.4,98.8 453.4,99.6 456.3,105.3 458.2,110.3 459.6,115.9 460.5,121.8 461.4,122.0 468.3,118.0 475.2,114.5 482.0,111.6 490.2,108.5 491.8,108.4 496.0,109.7 496.8,110.6 498.2,116.6 498.9,121.8 498.8,127.5 498.3,133.6 499.1,133.9 507.0,130.7 514.8,127.9 522.3,125.7 531.2,123.6 532.8,123.6 536.7,125.4 537.3,126.4 537.2,132.6 536.5,137.9 535.1,143.6 533.0,149.6 533.7,150.0 542.5,147.7 550.9,145.8 558.9,144.5 568.4,143.4 570.0,143.6 573.5,145.8 573.8,146.9 572.2,153.1 570.2,158.3 567.3,163.9 563.6,169.6 564.3,170.2 573.6,168.8 582.6,167.9 591.0,167.5 600.8,167.5 602.4,167.9 605.4,170.5 605.4,171.6 602.2,177.7 598.8,182.7 594.5,188.0 589.4,193.4 589.9,194.0 599.7,193.7 609.0,193.8 617.5,194.4 627.5,195.6 629.0,196.1 631.3,199.2 631.0,200.3 626.2,206.0 621.5,210.7 615.8,215.5 609.3,220.3 609.7,221.0 616.9,221.6ZM296.0,119.7 290.5,116.0 284.2,112.3 277.9,109.3 270.3,106.1 268.7,105.8 264.2,107.1 263.3,108.0 253.2,129.2 251.9,128.7 257.3,131.2 258.2,130.9 258.6,124.8 259.5,119.1 261.0,113.9 263.3,108.0 264.3,107.1 268.7,105.9 270.2,106.1 277.9,109.3 284.2,112.4 290.5,116.0 296.7,120.2 297.7,120.0 299.6,114.1 301.7,108.8ZM242.7,124.8 235.6,122.5 227.0,120.2 225.4,120.1 221.2,121.8 220.5,122.8 212.2,143.9 203.9,141.8 196.1,140.3 186.9,139.0 185.2,139.2 181.4,141.3 181.2,141.8 181.4,141.4 185.2,139.2 186.9,139.1 196.1,140.4 203.9,141.9 212.0,143.9 220.3,146.5 221.1,146.1 220.0,140.0 219.5,134.3 219.6,129.0 220.5,122.9 221.2,121.9 225.4,120.2 227.0,120.2 235.6,122.5 242.6,124.8 245.5,126.0ZM174.2,163.8 168.9,163.1 160.6,162.5 150.8,162.3 149.2,162.6 145.8,165.2 140.4,188.3 139.3,188.4 147.8,188.5 157.4,188.9 158.1,188.3 153.9,182.9 150.4,177.5 147.9,172.4 145.6,166.4 145.9,165.3 149.2,162.7 150.8,162.3 160.6,162.6 168.9,163.2 177.6,164.3 186.7,165.8 187.4,165.3 184.8,159.5 182.8,153.9 181.6,148.6 181.0,142.6ZM130.0,188.7 119.9,189.6 118.3,190.2 115.5,193.1 111.9,217.3 105.3,218.4 95.2,220.5 93.7,221.2 91.6,224.5 90.0,250.2 88.8,250.6 96.2,248.5 105.7,246.3 115.7,244.4 116.1,243.7 109.0,239.5 102.7,235.2 97.5,230.9 92.0,225.6 91.7,224.5 93.7,221.3 95.2,220.5 105.3,218.4 114.0,217.0 123.5,216.0 133.5,215.3 134.0,214.7 128.3,209.7 123.4,204.8 119.5,200.1 115.6,194.3 115.6,193.2 117.0,191.7 118.3,190.2 119.9,189.7 130.0,188.8 135.4,188.5Z" fill="#2f74d0" opacity="0.38"/>
<path fill-rule="evenodd" d="M138.6,503.0 138.7,504.5 141.9,507.6 143.7,507.8 154.7,506.3 160.6,505.2 149.1,499.1 142.0,495.1ZM178.2,515.3 176.2,522.7 174.6,531.4 175.0,532.9 179.0,535.4 180.9,535.4 191.7,532.4 200.7,529.4 209.9,525.6 198.1,521.5 189.5,518.2 178.8,513.7ZM219.1,528.5 217.8,538.0 217.5,545.6 218.0,554.4 218.7,555.8 223.5,557.8 225.4,557.5 235.6,553.0 243.9,548.7 252.5,543.5 259.5,538.8 243.4,535.2 234.1,532.8ZM262.3,546.6 263.2,554.8 264.7,562.3 267.4,570.9 268.5,572.2 273.7,573.4 275.6,572.9 284.7,567.0 292.0,561.6 299.4,555.4 306.6,548.5 307.7,548.6 310.0,557.0 312.8,564.9 316.2,572.1 320.9,580.2 322.3,581.2 327.8,581.7 329.5,580.9 337.2,573.9 343.3,567.5 355.5,552.6 355.7,552.6 360.0,560.5 364.7,567.8 369.7,574.3 376.4,581.6 378.0,582.4 383.6,582.1 385.1,581.1 407.4,553.6 410.3,556.9 416.7,563.4 423.3,569.0 431.5,575.1 433.3,575.7 438.7,574.6 440.0,573.4 459.4,546.7 466.8,551.8 474.5,556.4 484.0,561.1 485.9,561.5 491.0,559.6 499.1,547.1 508.7,531.7 513.0,533.7 521.6,537.0 531.9,540.3 533.8,540.4 538.3,537.9 553.4,509.8 562.6,511.9 573.4,513.7 575.2,513.5 579.0,510.5 591.6,481.9 596.3,482.2 607.1,482.5 608.9,482.1 611.8,478.7 618.0,460.6 610.9,466.3 604.2,471.4 597.2,476.3 590.0,481.2 582.6,485.9 574.9,490.4 567.1,494.9 559.2,499.1 551.0,503.3 542.7,507.2 534.1,511.1 525.5,514.7 516.6,518.2 507.7,521.5 498.6,524.6 489.3,527.5 480.0,530.3 470.5,532.8 460.9,535.2 451.3,537.4 441.5,539.3 431.7,541.1 421.8,542.7 411.8,544.1 401.8,545.2 391.8,546.2 381.7,546.9 371.6,547.4 361.5,547.7 351.4,547.9 341.4,547.7 331.3,547.4 321.3,546.9 311.3,546.2 301.4,545.2 291.5,544.1 281.7,542.7 272.0,541.1 262.1,539.3ZM633.8,447.5 634.6,445.9 632.4,448.1Z" fill="#1f5fc0" opacity="0.30"/>
<path d="M702.4,278.4 701.5,272.3 700.3,266.2 699.0,260.1 697.4,254.2 695.7,248.2 693.7,242.4 691.5,236.5 689.1,230.8 686.5,225.1 683.8,219.5 680.8,214.0 677.6,208.5 674.3,203.2 670.7,197.9 667.0,192.7 663.1,187.6 659.1,182.5 654.9,177.6 650.5,172.7 645.9,168.0 641.2,163.3 636.4,158.8 631.4,154.3 626.3,150.0 621.0,145.7 615.6,141.6 610.0,137.5 604.4,133.6 598.6,129.8 592.7,126.1 586.6,122.5 580.5,119.0 574.2,115.6 567.9,112.3 561.4,109.2 554.9,106.2 548.2,103.3 541.5,100.5 534.6,97.8 527.7,95.2 520.8,92.8 513.7,90.5 506.6,88.3 499.4,86.2 492.1,84.3 484.8,82.5 477.4,80.8 470.0,79.2 462.5,77.8 455.0,76.4 447.4,75.2 439.8,74.2 432.1,73.2 424.5,72.4 416.7,71.7 409.0,71.1 401.3,70.7 393.5,70.4 385.7,70.2 377.9,70.1 370.1,70.2 362.3,70.4 354.5,70.7 346.7,71.1 338.9,71.7 331.1,72.4 323.4,73.2 315.6,74.2 307.9,75.2 300.2,76.4 292.5,77.8 284.9,79.2 277.3,80.8 269.7,82.5 262.2,84.3 254.7,86.2 247.3,88.3 239.9,90.5 232.6,92.8 225.3,95.2 218.1,97.8 211.0,100.5 204.0,103.3 197.0,106.2 190.1,109.2 183.3,112.3 176.6,115.6 169.9,119.0 163.4,122.5 157.0,126.1 150.7,129.8 144.4,133.6 138.3,137.5 132.3,141.6 126.5,145.7 120.7,150.0 115.1,154.3 109.6,158.8 104.3,163.3 99.1,168.0 94.0,172.7 89.1,177.6 84.3,182.5 79.7,187.6 75.2,192.7 71.0,197.9 66.8,203.2 62.9,208.5 59.1,214.0 55.5,219.5 52.1,225.1 48.9,230.8 45.9,236.5 43.1,242.4 40.4,248.2 38.0,254.2 35.8,260.1 33.8,266.2 32.0,272.3 30.4,278.4 29.0,284.6 27.9,290.8 27.0,297.0 26.3,303.3 25.9,309.6 25.7,315.9 25.7,322.2 26.0,328.6 26.5,334.9 27.2,341.3 28.2,347.6 29.5,354.0 31.0,360.3 32.7,366.6 34.7,372.9 37.0,379.2 39.5,385.4 42.3,391.6 45.3,397.8 48.5,403.9 52.1,410.0 55.8,415.9 59.9,421.9 64.2,427.7 68.7,433.5 73.5,439.2 78.5,444.8 83.8,450.3 89.3,455.8 95.0,461.1 101.0,466.3 107.2,471.4 113.7,476.3 120.3,481.2 127.2,485.9 134.3,490.4 141.6,494.9 149.1,499.1 156.8,503.3 164.7,507.2 172.8,511.1 181.1,514.7 189.5,518.2 198.1,521.5 206.9,524.6 215.8,527.5 224.9,530.3 234.1,532.8 243.4,535.2 252.8,537.4 262.3,539.3 272.0,541.1 281.7,542.7 291.5,544.1 301.4,545.2 311.3,546.2 321.3,546.9 331.3,547.4 341.4,547.7 351.4,547.9 361.5,547.7 371.6,547.4 381.7,546.9 391.8,546.2 401.8,545.2 411.8,544.1 421.8,542.7 431.7,541.1 441.5,539.3 451.3,537.4 460.9,535.2 470.5,532.8 480.0,530.3 489.3,527.5 498.6,524.6 507.7,521.5 516.6,518.2 525.5,514.7 534.1,511.1 542.7,507.2 551.0,503.3 559.2,499.1 567.1,494.9 574.9,490.4 582.6,485.9 590.0,481.2 597.2,476.3 604.2,471.4 610.9,466.3 617.5,461.1 623.8,455.8 629.9,450.3 635.8,444.8 641.5,439.2 646.9,433.5 652.1,427.7 657.0,421.9 661.7,415.9 666.1,410.0 670.3,403.9 674.3,397.8 677.9,391.6 681.4,385.4 684.6,379.2 687.5,372.9 690.2,366.6 692.7,360.3 694.9,354.0 696.8,347.6 698.6,341.3 700.0,334.9 701.2,328.6 702.2,322.2 702.9,315.9 703.4,309.6 703.7,303.3 703.7,297.0 703.5,290.8 703.0,284.6Z" fill="none" stroke="#0a0f18" stroke-width="1.5"/>
<path d="M354.1,583.6 330.0,1035.6" stroke="#38d24a" stroke-width="1.4" fill="none"/>
<path d="M664.0,300.3 664.0,298.5 663.0,297.4 661.4,296.5 654.4,292.6 646.7,288.9 638.0,285.3 628.7,282.0 628.6,281.2 637.6,278.1 645.7,274.8 652.8,271.3 659.1,267.7 660.6,266.8 661.4,265.8 661.0,264.0 660.7,262.2 659.4,261.3 657.7,260.6 650.1,257.7 641.8,255.1 632.7,252.7 622.9,250.5 622.6,249.8 630.4,245.8 637.5,241.6 643.4,237.4 648.5,233.2 649.7,232.3 650.3,231.2 649.5,229.5 648.7,227.8 647.3,227.1 645.4,226.6 637.5,224.7 629.0,223.1 619.6,221.9 609.7,221.0 609.3,220.3 615.8,215.5 621.5,210.7 626.2,206.0 630.1,201.4 631.0,200.3 631.3,199.2 630.1,197.7 629.0,196.1 627.5,195.6 625.6,195.4 617.5,194.4 609.0,193.8 599.7,193.7 589.9,194.0 589.4,193.4 594.5,188.0 598.8,182.7 602.2,177.7 604.8,172.8 605.4,171.6 605.4,170.5 603.9,169.2 602.4,167.9 600.8,167.5 599.0,167.5 591.0,167.5 582.6,167.9 573.6,168.8 564.3,170.2 563.6,169.6 567.3,163.9 570.2,158.3 572.2,153.1 573.5,148.0 573.8,146.9 573.5,145.8 571.8,144.7 570.0,143.6 568.4,143.4 566.6,143.6 558.9,144.5 550.9,145.8 542.5,147.7 533.7,150.0 533.0,149.6 535.1,143.6 536.5,137.9 537.2,132.6 537.3,127.6 537.3,126.4 536.7,125.4 534.8,124.5 532.8,123.6 531.2,123.6 529.5,124.0 522.3,125.7 514.8,127.9 507.0,130.7 499.1,133.9 498.3,133.6 498.8,127.5 498.9,121.8 498.2,116.6 497.1,111.7 496.8,110.6 496.0,109.7 493.9,109.0 491.8,108.4 490.2,108.5 488.6,109.1 482.0,111.6 475.2,114.5 468.3,118.0 461.4,122.0 460.5,121.8 459.6,115.9 458.2,110.3 456.3,105.3 453.9,100.7 453.4,99.6 452.4,98.8 450.2,98.4 447.9,98.0 446.4,98.3 445.0,99.1 439.1,102.2 433.2,105.8 427.3,110.0 421.5,114.7 420.5,114.5 418.1,108.8 415.4,103.6 412.3,98.9 408.8,94.6 408.0,93.6 406.9,93.0 404.6,92.8 402.2,92.7 400.8,93.2 399.7,94.0 394.6,97.7 389.7,101.9 384.9,106.6 380.3,111.8 379.3,111.8 375.5,106.5 371.5,101.7 367.2,97.4 362.8,93.6 361.7,92.7 360.4,92.2 358.1,92.3 355.8,92.4 354.5,93.0 353.5,94.0 349.4,98.2 345.5,102.8 342.0,108.0 338.7,113.6 337.7,113.7 332.6,108.9 327.4,104.6 322.1,100.9 316.7,97.7 315.5,96.9 314.0,96.5 311.7,96.9 309.4,97.2 308.3,98.0 307.6,99.1 304.5,103.6 301.8,108.6 299.6,114.1 297.7,120.0 296.7,120.2 290.5,116.0 284.2,112.4 277.9,109.3 271.7,106.7 270.2,106.1 268.7,105.9 266.5,106.5 264.3,107.1 263.3,108.0 262.9,109.1 261.0,113.9 259.5,119.1 258.6,124.8 258.2,130.9 257.3,131.2 249.9,127.8 242.6,124.8 235.6,122.5 228.6,120.7 227.0,120.2 225.4,120.2 223.3,121.0 221.2,121.9 220.5,122.9 220.4,124.0 219.6,129.0 219.5,134.3 220.0,140.0 221.1,146.1 220.3,146.5 212.0,143.9 203.9,141.9 196.1,140.4 188.6,139.3 186.9,139.1 185.2,139.2 183.3,140.3 181.4,141.4 181.0,142.4 181.1,143.6 181.6,148.6 182.8,153.9 184.8,159.5 187.4,165.3 186.7,165.8 177.6,164.3 168.9,163.2 160.6,162.6 152.7,162.4 150.8,162.3 149.2,162.7 147.5,164.0 145.9,165.3 145.6,166.4 146.1,167.5 147.9,172.4 150.4,177.5 153.9,182.9 158.1,188.3 157.4,188.9 147.8,188.5 138.6,188.4 130.0,188.8 121.8,189.5 119.9,189.7 118.3,190.2 117.0,191.7 115.6,193.2 115.6,194.3 116.4,195.4 119.5,200.1 123.4,204.8 128.3,209.7 134.0,214.7 133.5,215.3 123.5,216.0 114.0,217.0 105.3,218.4 97.2,220.1 95.2,220.5 93.7,221.3 92.7,222.9 91.7,224.5 92.0,225.6 93.1,226.6 97.5,230.9 102.7,235.2 109.0,239.5 116.1,243.7 115.7,244.4 105.7,246.3 96.2,248.5 87.6,250.9 79.6,253.6 77.8,254.3 76.4,255.2 75.8,256.9 75.1,258.7 75.8,259.8 77.1,260.6 82.7,264.4 89.2,268.0 96.8,271.5 105.1,274.8 105.0,275.6 95.1,278.7 85.9,282.0 77.7,285.5 70.2,289.2 68.4,290.1 67.3,291.1 67.0,293.0 66.8,294.8 67.8,295.8 69.4,296.5 76.1,299.5 83.7,302.3 92.4,304.9 101.9,307.1 101.9,307.9 92.6,312.2 84.0,316.7 76.4,321.2 69.6,325.9 68.0,327.0 67.1,328.2 67.3,330.0 67.6,331.9 68.8,332.7 70.6,333.2 78.4,335.4 86.9,337.2 96.5,338.6 106.8,339.7 107.0,340.4 98.6,345.9 90.9,351.5 84.3,357.0 78.4,362.5 77.1,363.8 76.4,365.1 77.2,366.9 77.9,368.7 79.4,369.4 81.4,369.7 89.9,370.8 99.2,371.5 109.4,371.7 120.2,371.4 120.6,372.1 113.3,378.7 106.9,385.2 101.5,391.5 96.9,397.7 95.9,399.2 95.5,400.6 96.7,402.3 98.0,404.0 99.7,404.5 101.8,404.5 110.9,404.5 120.5,404.0 131.0,402.8 142.0,401.1 142.6,401.8 136.8,409.2 131.9,416.6 128.0,423.6 124.9,430.3 124.2,431.9 124.2,433.4 125.9,434.9 127.6,436.5 129.5,436.7 131.6,436.4 140.9,435.2 150.7,433.4 161.0,430.8 171.8,427.6 172.6,428.2 168.6,436.4 165.5,444.3 163.3,451.8 161.9,458.9 161.5,460.6 161.9,462.0 164.0,463.3 166.1,464.6 168.1,464.6 170.2,464.0 179.4,461.5 188.8,458.4 198.7,454.5 208.8,449.9 209.8,450.4 207.8,459.0 206.6,467.2 206.3,474.9 206.7,482.1 206.8,483.8 207.5,485.1 210.0,486.1 212.4,487.1 214.4,486.8 216.4,486.0 225.1,482.3 233.8,478.0 242.8,472.7 251.8,466.9 252.9,467.2 253.1,475.9 254.0,484.2 255.6,491.7 257.8,498.8 258.3,500.5 259.4,501.7 262.1,502.3 264.9,503.0 266.8,502.4 268.6,501.3 276.4,496.5 284.1,491.0 291.8,484.7 299.3,477.7 300.5,477.9 302.9,486.4 305.8,494.4 309.3,501.6 313.3,508.2 314.2,509.8 315.6,510.8 318.5,511.1 321.4,511.3 323.2,510.5 324.7,509.2 331.2,503.4 337.6,497.0 343.6,489.8 349.4,481.9 350.6,481.9 355.1,489.9 360.0,497.3 365.3,503.9 370.9,509.8 372.2,511.2 373.9,512.0 376.8,511.9 379.7,511.7 381.3,510.7 382.5,509.2 387.5,502.7 392.1,495.6 396.4,487.7 400.1,479.2 401.3,479.1 407.8,486.3 414.4,492.8 421.3,498.5 428.2,503.5 429.9,504.7 431.7,505.2 434.5,504.7 437.4,504.1 438.7,502.9 439.4,501.3 442.8,494.3 445.6,486.8 447.8,478.5 449.4,469.8 450.6,469.5 458.6,475.7 466.8,481.1 474.9,485.7 482.9,489.6 484.8,490.5 486.7,490.8 489.3,489.9 492.0,489.0 493.0,487.7 493.3,486.0 494.8,478.8 495.8,471.1 495.9,462.8 495.3,454.2 496.4,453.8 505.7,458.6 515.0,462.8 524.0,466.2 532.7,468.9 534.8,469.5 536.7,469.6 539.1,468.3 541.4,467.1 542.0,465.7 542.0,464.0 541.7,456.8 540.7,449.3 538.8,441.3 536.1,433.0 537.0,432.5 547.3,435.9 557.3,438.8 566.8,440.9 575.9,442.3 578.0,442.7 579.9,442.5 581.9,441.0 583.8,439.5 584.1,438.0 583.6,436.4 581.6,429.5 578.8,422.4 575.1,415.0 570.5,407.4 571.2,406.7 582.0,408.7 592.3,410.2 601.9,410.9 611.0,411.2 613.2,411.2 614.9,410.8 616.5,409.1 617.9,407.4 617.8,406.0 617.0,404.5 613.4,398.2 609.0,391.7 603.6,385.0 597.4,378.2 597.9,377.5 608.7,378.1 619.0,378.2 628.4,377.7 637.2,376.8 639.2,376.6 640.8,376.0 641.9,374.2 642.9,372.3 642.4,371.0 641.3,369.7 636.3,364.0 630.6,358.3 623.7,352.6 616.1,346.9 616.5,346.1 627.0,345.3 636.8,344.2 645.7,342.5 653.9,340.6 655.8,340.1 657.1,339.3 657.7,337.5 658.2,335.6 657.5,334.4 656.1,333.2 650.0,328.4 643.1,323.7 635.2,319.0 626.5,314.4 626.7,313.6 636.5,311.6 645.7,309.3 653.8,306.7 661.1,303.8 662.8,303.1 663.9,302.2Z" fill="none" stroke="#0e2a55" stroke-width="1.1" stroke-linejoin="round"/>
<path d="M77.8,254.2 76.4,255.2 75.1,258.7 75.7,286.4 68.4,290.0 67.2,291.1 66.8,294.8 70.3,325.3 68.0,326.9 67.0,328.2 67.5,331.9 73.6,360.9 82.5,400.2 83.6,403.6 84.8,404.4 88.6,405.5 94.1,422.1 92.8,429.6 92.3,436.6 93.8,440.3 95.2,441.0 105.4,442.4 112.6,442.9 118.0,455.4 112.7,466.8 111.2,470.5 110.9,472.0 113.3,475.4 114.9,475.9 125.7,475.9 134.9,475.4 144.9,474.2 149.2,482.0 142.2,494.7 138.6,503.0 138.7,504.5 141.9,507.6 143.7,507.8 154.7,506.3 164.0,504.5 174.0,502.0 184.2,498.8 184.9,499.3 181.2,507.4 178.2,515.3 176.2,522.7 174.6,531.4 175.0,532.9 179.0,535.4 180.9,535.4 191.7,532.4 200.7,529.4 210.2,525.4 219.8,520.9 220.7,521.4 218.9,529.8 217.8,538.0 217.5,545.6 218.0,554.4 218.7,555.8 223.5,557.8 225.4,557.5 235.6,553.0 243.9,548.7 252.5,543.5 261.1,537.7 262.1,538.0 262.3,546.6 263.2,554.8 264.7,562.3 267.4,570.9 268.5,572.2 273.7,573.4 275.6,572.9 284.7,567.0 292.0,561.6 299.4,555.4 306.6,548.5 307.7,548.6 310.0,557.0 312.8,564.9 316.2,572.1 320.9,580.2 322.3,581.2 327.8,581.7 329.5,580.9 337.2,573.9 343.3,567.5 355.5,552.6 355.7,552.6 360.0,560.5 364.7,567.8 369.7,574.3 376.4,581.6 378.0,582.4 383.6,582.1 385.1,581.1 407.4,553.6 410.3,556.9 416.7,563.4 423.3,569.0 431.5,575.1 433.3,575.7 438.7,574.6 440.0,573.4 459.4,546.7 466.8,551.8 474.5,556.4 484.0,561.1 485.9,561.5 491.0,559.6 499.1,547.1 508.7,531.7 513.0,533.7 521.6,537.0 531.9,540.3 533.8,540.4 538.3,537.9 553.4,509.8 562.6,511.9 573.4,513.7 575.2,513.5 579.0,510.5 591.6,481.9 596.3,482.2 607.1,482.5 608.9,482.1 611.8,478.7 621.9,449.2 632.2,448.1 633.8,447.5 634.8,445.7 635.8,443.8 643.5,413.0 648.2,411.8 649.6,411.0 650.7,407.3 655.8,374.4 656.2,374.0 656.8,367.1 658.8,351.0 658.9,343.5 658.7,339.5 659.7,317.9 662.2,310.2 663.1,306.2 663.9,302.2 664.1,298.5 663.1,297.4 652.9,291.8 652.4,282.4 657.2,274.2 661.4,265.8 660.7,262.2 659.4,261.3 650.1,257.7 641.8,255.0 637.7,253.9 637.2,249.7 646.7,236.8 650.3,231.2 648.7,227.8 647.3,227.0 637.5,224.7 629.0,223.1 615.1,221.4 614.9,220.7 631.1,200.3 631.3,199.2 629.0,196.1 627.5,195.5 617.5,194.4 609.0,193.8 599.7,193.7 590.2,193.9 598.9,182.8 602.2,177.7 605.5,171.7 605.4,170.5 602.5,167.8 600.9,167.4 591.0,167.5 582.6,167.9 573.6,168.8 564.3,170.1 563.7,169.6 567.3,163.9 570.2,158.3 572.2,153.1 573.9,146.9 573.6,145.8 570.1,143.5 568.4,143.3 558.9,144.4 550.9,145.7 542.4,147.6 533.7,150.0 533.0,149.6 535.1,143.6 536.6,137.9 537.2,132.6 537.3,126.4 536.8,125.4 532.8,123.6 531.2,123.6 522.2,125.7 514.8,127.8 507.0,130.6 499.1,133.8 498.3,133.5 498.9,127.5 498.9,121.8 498.3,116.6 496.8,110.6 496.0,109.6 491.8,108.3 490.2,108.5 482.0,111.5 475.2,114.4 468.3,118.0 461.4,122.0 460.5,121.8 459.6,115.9 458.2,110.3 456.3,105.3 453.4,99.6 452.4,98.8 447.9,97.9 446.4,98.3 439.1,102.1 433.2,105.7 427.3,109.9 421.5,114.6 420.5,114.5 418.2,108.8 415.4,103.5 412.3,98.9 408.1,93.6 406.9,92.9 402.2,92.6 400.8,93.1 394.6,97.7 389.6,101.8 384.8,106.6 380.2,111.8 379.3,111.8 375.6,106.5 371.5,101.6 367.3,97.4 361.8,92.7 360.4,92.1 358.1,92.2 355.7,92.4 354.5,93.0 349.4,98.2 345.5,102.8 341.9,108.0 338.7,113.6 337.7,113.7 332.7,108.9 327.5,104.6 322.2,100.9 315.5,96.9 314.0,96.5 309.4,97.2 308.3,98.0 304.5,103.6 296.0,119.7 290.5,116.0 284.2,112.3 277.9,109.3 270.3,106.1 268.7,105.8 264.2,107.1 263.3,108.0 253.2,129.2 242.7,124.8 235.6,122.5 227.0,120.2 225.4,120.1 221.2,121.8 220.5,122.8 212.2,143.9 203.9,141.8 196.1,140.3 186.9,139.0 185.2,139.2 181.4,141.3 174.2,163.8 168.9,163.1 160.6,162.5 150.8,162.3 149.2,162.6 145.8,165.2 140.4,188.3 130.0,188.7 119.9,189.6 118.3,190.2 115.5,193.1 111.9,217.3 105.3,218.4 95.2,220.5 93.7,221.2 91.6,224.5 90.0,250.2Z" fill="none" stroke="#b7c3d2" stroke-width="1.7" stroke-linejoin="round"/>
<path d="M642.4,315.0 641.1,304.8 639.0,294.8 636.3,284.9 632.8,275.2 628.7,265.8 624.0,256.5 618.6,247.5 612.6,238.8 606.0,230.3 598.9,222.1 591.2,214.3 583.0,206.8 574.3,199.6 565.2,192.8 555.7,186.3 545.7,180.2 535.4,174.5 524.7,169.2 513.6,164.3 502.3,159.8 490.7,155.7 478.8,152.0 466.7,148.8 454.4,145.9 441.9,143.5 429.3,141.6 416.6,140.0 403.7,138.9 390.8,138.3 377.8,138.1 364.8,138.3 351.8,138.9 338.9,140.0 326.0,141.6 313.1,143.5 300.4,145.9 287.8,148.8 275.3,152.0 263.1,155.7 251.0,159.8 239.2,164.3 227.7,169.2 216.4,174.5 205.4,180.2 194.8,186.3 184.6,192.8 174.7,199.6 165.3,206.8 156.3,214.3 147.8,222.1 139.8,230.3 132.4,238.8 125.4,247.5 119.1,256.5 113.3,265.8 108.2,275.2 103.7,284.9 99.9,294.8 96.8,304.8 94.4,315.0 92.7,325.3 91.8,335.7 91.6,346.1 92.2,356.5 93.6,367.0 95.8,377.4 98.8,387.8 102.6,398.0 107.1,408.1 112.5,418.1 118.7,427.9 125.7,437.4 133.5,446.6 142.0,455.6 151.2,464.2 161.2,472.5 171.9,480.3 183.3,487.7 195.3,494.6 207.9,501.1 221.0,507.0 234.7,512.4 248.8,517.2 263.4,521.4 278.3,525.0 293.6,527.9 309.1,530.2 324.9,531.9 340.8,532.9 356.8,533.2 372.8,532.9 388.8,531.9 404.7,530.2 420.5,527.9 436.1,525.0 451.4,521.4 466.4,517.2 481.1,512.4 495.3,507.0 509.1,501.1 522.4,494.6 535.1,487.7 547.3,480.3 558.8,472.5 569.7,464.2 579.8,455.6 589.3,446.6 598.1,437.4 606.1,427.9 613.3,418.1 619.7,408.1 625.4,398.0 630.3,387.8 634.4,377.4 637.7,367.0 640.2,356.5 641.9,346.1 642.8,335.7 643.0,325.3Z" fill="none" stroke="#74c0c4" stroke-width="1" stroke-dasharray="10,6" opacity="0.4" clip-path="url(#bodyclip)"/>
<defs><filter id="vcb" x="-30%" y="-50%" width="160%" height="250%"><feGaussianBlur stdDeviation="4"/></filter>
<linearGradient id="vcg" x1="0" y1="0" x2="0" y2="1"><stop offset="0" stop-color="#e6e6e6"/><stop offset="1" stop-color="#d4d4d4"/></linearGradient></defs>
<path d="M878,-6 L940,-6 L938,18 L882,18 Z" fill="#999" opacity="0.55" filter="url(#vcb)"/>
<path d="M884.5,-4 L933,-4 L932.5,11.5 L885.5,12.5 Z" fill="url(#vcg)" stroke="#b5b5b5" stroke-width="0.8"/>
<text x="892" y="0.5" font-size="11" fill="#9a9a9a" letter-spacing="0.5">FRONT</text>
<path d="M882.5,-2 L885,13" stroke="#3a3ae0" stroke-width="2.2" fill="none"/>
<path d="M885,13.3 L940.5,14" stroke="#f05a5a" stroke-width="2" fill="none"/>
<text x="943" y="18.8" font-size="14.5" fill="#f57f7f" font-weight="bold" textLength="7.2" lengthAdjust="spacingAndGlyphs">X</text>
<rect x="655.5" y="41.5" width="312" height="152" fill="#f0f0f0" stroke="#c3c3c3" stroke-width="1"/>
<rect x="656" y="70" width="310" height="2" fill="#c6c6c6"/>
<rect x="656" y="148.6" width="310" height="1.6" fill="#c8c8c8"/>
<circle cx="675.6" cy="56.3" r="5.6" fill="#222"/><rect x="672.1" y="55.3" width="7" height="2" fill="#f0f0f0"/>
<text x="686.6" y="61.3" font-size="13.7" fill="#575757">EDIT FEATURE</text>
<path d="M948,52.8 L954,56.8 L948,60.8Z M954.5,52.8 L960.5,56.8 L954.5,60.8Z" fill="#1a1a1a"/>
<text x="671.3" y="96.2" font-size="13.7" fill="#2b2b2b">Faces</text>
<rect x="741" y="74.3" width="112" height="33.2" fill="#1193d8"/>
<path d="M751.5,82.5 L751.5,97 L755,93.8 L757.4,99.3 L759.6,98.3 L757.2,93 L761.8,93 Z" fill="#fff" stroke="#3c3c3c" stroke-width="1.1" stroke-linejoin="round"/>
<text x="767.6" y="96.2" font-size="13.7" fill="#fff">288 selected</text>
<path d="M868.5,86.5 L877.5,95.5 M877.5,86.5 L868.5,95.5" stroke="#3a3a3a" stroke-width="2.3" fill="none"/>
<text x="671.3" y="133.2" font-size="13.7" fill="#2b2b2b">Distance</text>
<rect x="741.5" y="112.5" width="184" height="31.5" fill="#fff" stroke="#c9c9c9" stroke-width="1"/>
<text x="745" y="133.2" font-size="13.7" fill="#2b2b2b">-backlash</text>
<text x="907" y="132.3" font-size="14.6" fill="#b2b2b2" font-style="italic">fx</text>
<circle cx="673.8" cy="172.2" r="7.2" fill="#111"/><rect x="672.8" y="170.8" width="2.2" height="5.4" fill="#fff"/><circle cx="673.9" cy="168.3" r="1.3" fill="#fff"/><rect x="671.6" y="175.4" width="4.6" height="1.2" fill="#fff"/><rect x="671.8" y="170.8" width="2" height="1.1" fill="#fff"/>
<rect x="790.5" y="160.5" width="74" height="22" fill="#e4e4e4" stroke="#b4b4b4"/>
<text x="827.5" y="177.3" font-size="14.6" fill="#4c4c4c" text-anchor="middle">OK</text>
<rect x="878.5" y="160.5" width="74" height="22" fill="#e4e4e4" stroke="#b4b4b4"/>
<text x="915.5" y="177.3" font-size="14.6" fill="#4c4c4c" text-anchor="middle">Cancel</text>
<path d="M353,263 L371.8,258.2 L371.8,266.5 L366,266.2 Z" fill="#8ecbca"/>
<path d="M369,293 L368,309" stroke="#9ccfcf" stroke-width="2.4" fill="none"/>
<rect x="282" y="266" width="135" height="27" fill="#f1f1f1"/>
<path d="M287,269 l2,3 l-2,3 l2,3 l-2,3 l2,3 l-2,3 l2,3 M289.5,269 l2,3 l-2,3 l2,3 l-2,3 l2,3 l-2,3 l2,3" stroke="#d9d9d9" stroke-width="1" fill="none"/>
<rect x="295" y="266.5" width="1.4" height="26" fill="#d6d6d6"/>
<rect x="300.5" y="267.8" width="86" height="24" fill="#fff" stroke="#bdbdbd" stroke-width="1"/>
<rect x="313.2" y="272" width="59.3" height="17" fill="#0b66d2"/>
<rect x="372.3" y="272" width="1" height="17" fill="#f08a24"/>
<text x="313.8" y="285.4" font-size="13.7" fill="#fff">-backlash</text>
<circle cx="402.2" cy="273.2" r="1.8" fill="#7e7e7e"/><circle cx="402.2" cy="279.4" r="1.8" fill="#7e7e7e"/><circle cx="402.2" cy="285.6" r="1.8" fill="#7e7e7e"/>
<ellipse cx="368" cy="315.6" rx="10.8" ry="8.2" fill="#8abcbc" stroke="#717b7e" stroke-width="1.5"/>
<ellipse cx="368" cy="315.6" rx="6.1" ry="5.5" fill="#fbf4f4" stroke="#90c662" stroke-width="2.3"/>
<text x="117" y="209.5" font-size="17" fill="#1f3557" opacity="0.5">0.15</text>
<path d="M126,212.5 L139.5,206.5 L152,211 L140,212 L137,216 L133,213.5 Z" fill="#2f9be8"/>
<path d="M131,214.5 L136,211.5 M137,215 L141,211.5" stroke="#e8f3ff" stroke-width="1.4" fill="none"/>
</svg>
</body></html>
